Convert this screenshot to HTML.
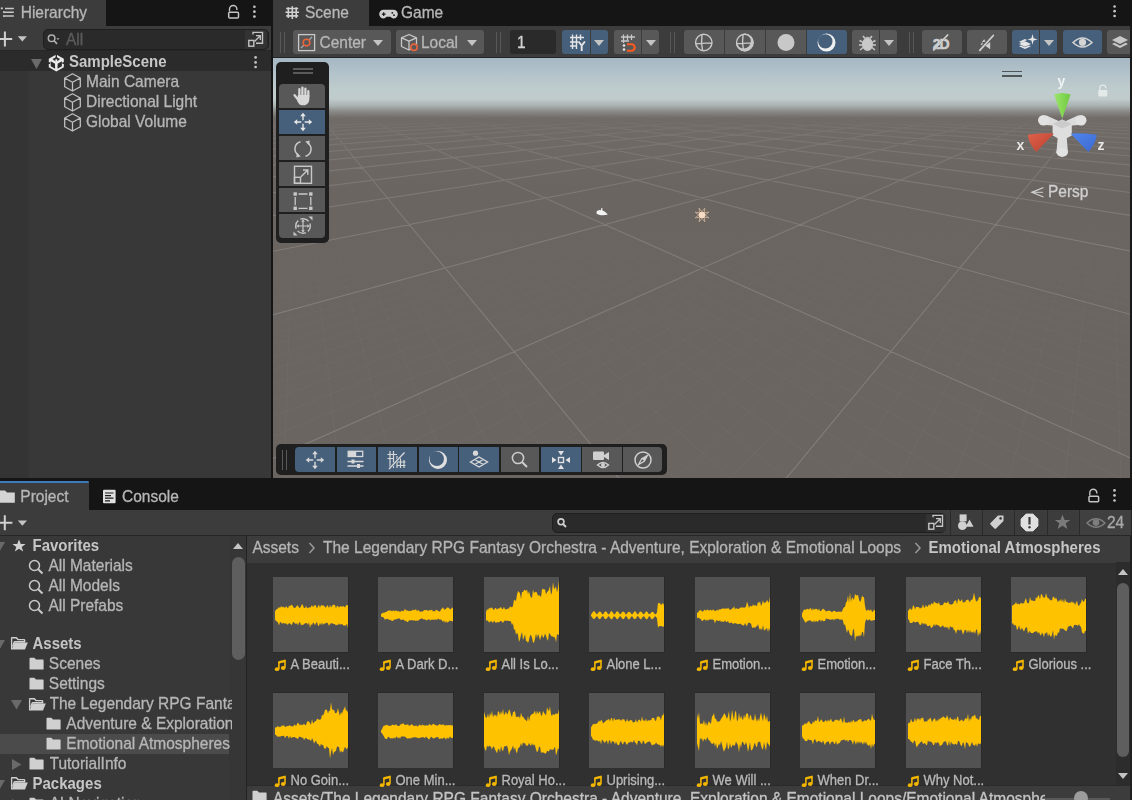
<!DOCTYPE html>
<html><head><meta charset="utf-8"><style>
*{margin:0;padding:0;box-sizing:border-box}
html,body{width:1132px;height:800px;overflow:hidden;background:#151515}
body{position:relative;font-family:"Liberation Sans",sans-serif;color:#b6b6b6;font-size:15px}
.a{position:absolute}
.t{position:absolute;white-space:nowrap;line-height:20px;-webkit-text-stroke:0.3px currentColor;transform:scaleY(1.08);transform-origin:0 15.2px}
svg{position:absolute;overflow:visible}
.t[style*="bold"]{-webkit-text-stroke:0}
</style></head><body>
<!-- Hierarchy panel -->
<div class="a" style="left:0;top:0;width:106px;height:26px;background:#3c3c3c"></div>
<div class="a" style="left:0;top:26px;width:271px;height:24px;background:#3c3c3c"></div>
<div class="a" style="left:0;top:50px;width:271px;height:1px;background:#262626"></div>
<div class="a" style="left:0;top:51px;width:271px;height:20px;background:#2b2b2b"></div>
<div class="a" style="left:0;top:71px;width:271px;height:407px;background:#383838"></div>
<div class="a" style="left:0;top:71px;width:29px;height:407px;background:#343434"></div>
<svg style="left:0;top:5px" width="16" height="16" viewBox="0 0 16 16"><path d="M5 3.4H13.8M5 7.2H13.8M5 11.1H13.8" stroke="#c8c8c8" stroke-width="1.5"/><circle cx="1.8" cy="3.3" r="1.1" fill="#c8c8c8"/><circle cx="4" cy="7.2" r="1.1" fill="#c8c8c8"/><circle cx="4" cy="11.1" r="1.1" fill="#c8c8c8"/></svg>
<div class="t" style="left:20.7px;top:2.5px;font-size:15.5px">Hierarchy</div>
<svg style="left:227px;top:4px" width="14" height="16" viewBox="0 0 14 16"><path d="M2.5 7.5V5.2A3.7 3.7 0 0 1 9.9 5.2V6" fill="none" stroke="#c4c4c4" stroke-width="1.4"/><rect x="1.7" y="8.3" width="9.8" height="5.6" rx="1" fill="none" stroke="#c4c4c4" stroke-width="1.5"/></svg>
<svg style="left:252px;top:5px" width="5" height="14" viewBox="0 0 5 14"><circle cx="2.4" cy="1.75" r="1.35" fill="#c4c4c4"/><circle cx="2.4" cy="6.7" r="1.35" fill="#c4c4c4"/><circle cx="2.4" cy="11.6" r="1.35" fill="#c4c4c4"/></svg>
<svg style="left:0;top:30px" width="30" height="18" viewBox="0 0 30 18"><path d="M4.9 1.5V16.5M0 8.9H12.2" stroke="#d0d0d0" stroke-width="2"/><path d="M17.8 6.2H26.9L22.35 11.6Z" fill="#c4c4c4"/></svg>
<div class="a" style="left:42.5px;top:29px;width:226px;height:20.5px;background:#2a2a2a;border:1px solid #1f1f1f;border-radius:5px"></div>
<div class="a" style="left:245px;top:30px;width:22px;height:18.5px;background:#333333;border-radius:0 4px 4px 0"></div>
<svg style="left:46px;top:33px" width="16" height="14" viewBox="0 0 16 14"><circle cx="5.6" cy="5.2" r="3.3" fill="none" stroke="#b0b0b0" stroke-width="1.5"/><path d="M7.9 7.5L11 10.8" stroke="#b0b0b0" stroke-width="1.7"/><path d="M10.3 5.2H13.5L11.9 7Z" fill="#b0b0b0"/></svg>
<div class="t" style="left:66px;top:29.5px;font-size:15.5px;color:#5c5c5c">All</div>
<svg style="left:247px;top:31px" width="18" height="17" viewBox="0 0 18 17"><path d="M6 3.5V1.4H15.5V12.2H9" fill="none" stroke="#c4c4c4" stroke-width="1.4"/><rect x="1.8" y="9.4" width="5" height="5.8" fill="none" stroke="#c4c4c4" stroke-width="1.4"/><path d="M7.5 10.5L13 5M9 4.7H13.3V9" fill="none" stroke="#c4c4c4" stroke-width="1.3"/></svg>
<svg style="left:31px;top:58.5px" width="11" height="10" viewBox="0 0 11 10"><path d="M0 0H11L5.5 10Z" fill="#6a6a6a"/></svg>
<svg style="left:47.5px;top:53.5px" width="17" height="18" viewBox="0 0 17 18"><path d="M8.3 0.6L15.8 4.8V13.2L8.3 17.4L0.8 13.2V4.8Z" fill="#ececec"/><path d="M2.7 7.3L7.1 9.8V14.7L2.7 12.2Z M13.9 7.3L9.5 9.8V14.7L13.9 12.2Z" fill="#2b2b2b"/><path d="M8.3 2.9L12.2 5.1L8.3 7.9L4.4 5.1Z" fill="#2b2b2b"/><path d="M7.6 0L9 0V5.5H7.6Z M0 8.2H2.2V10H0Z M14.4 8.2H17V10H14.4Z" fill="#2b2b2b"/><path d="M8.3 5.3L8.3 12" stroke="#ececec" stroke-width="1.9"/></svg>
<div class="t" style="left:69px;top:52px;font-weight:bold;color:#c6c6c6;font-size:15px">SampleScene</div>
<svg style="left:253px;top:55px" width="5" height="14" viewBox="0 0 5 14"><circle cx="2.6" cy="2.4" r="1.35" fill="#c4c4c4"/><circle cx="2.6" cy="7.4" r="1.35" fill="#c4c4c4"/><circle cx="2.6" cy="12" r="1.35" fill="#c4c4c4"/></svg>
<svg style="left:64px;top:73px" width="18" height="19" viewBox="0 0 18 19"><path d="M8.5 0.8L16.3 5V13.8L8.5 18L0.7 13.8V5Z M0.7 5L8.5 9.3L16.3 5 M8.5 9.3V18" fill="none" stroke="#c0c0c0" stroke-width="1.3" stroke-linejoin="round"/></svg>
<svg style="left:64px;top:93px" width="18" height="19" viewBox="0 0 18 19"><path d="M8.5 0.8L16.3 5V13.8L8.5 18L0.7 13.8V5Z M0.7 5L8.5 9.3L16.3 5 M8.5 9.3V18" fill="none" stroke="#c0c0c0" stroke-width="1.3" stroke-linejoin="round"/></svg>
<svg style="left:64px;top:113px" width="18" height="19" viewBox="0 0 18 19"><path d="M8.5 0.8L16.3 5V13.8L8.5 18L0.7 13.8V5Z M0.7 5L8.5 9.3L16.3 5 M8.5 9.3V18" fill="none" stroke="#c0c0c0" stroke-width="1.3" stroke-linejoin="round"/></svg>
<div class="t" style="left:86px;top:72px;font-size:15.5px">Main Camera</div>
<div class="t" style="left:86px;top:92px;font-size:15.5px">Directional Light</div>
<div class="t" style="left:86px;top:112px;font-size:15.5px">Global Volume</div>
<!-- Scene panel -->
<div class="a" style="left:273px;top:0;width:96px;height:26px;background:#3c3c3c"></div>
<div class="a" style="left:273px;top:26px;width:859px;height:31px;background:#3c3c3c"></div>
<div class="a" style="left:273px;top:57px;width:859px;height:1px;background:#242424"></div>
<div class="t" style="left:305px;top:3px;font-size:15.5px">Scene</div>
<div class="t" style="left:401px;top:3px;font-size:15.5px">Game</div>
<div class="a" style="left:273px;top:58px;width:859px;height:420px;background:#6b6561;overflow:hidden" id="sv"></div>
<svg class="a" style="left:273px;top:58px" width="859" height="420" viewBox="0 0 859 420">
<defs><linearGradient id="gmin" gradientUnits="userSpaceOnUse" x1="0" y1="0" x2="0" y2="420"><stop offset="0.0714" stop-color="#fff" stop-opacity="0.000"/><stop offset="0.0952" stop-color="#fff" stop-opacity="0.000"/><stop offset="0.1190" stop-color="#fff" stop-opacity="0.000"/><stop offset="0.1429" stop-color="#fff" stop-opacity="0.000"/><stop offset="0.1667" stop-color="#fff" stop-opacity="0.000"/><stop offset="0.1905" stop-color="#fff" stop-opacity="0.000"/><stop offset="0.2143" stop-color="#fff" stop-opacity="0.000"/><stop offset="0.2381" stop-color="#fff" stop-opacity="0.000"/><stop offset="0.2619" stop-color="#fff" stop-opacity="0.000"/><stop offset="0.2857" stop-color="#fff" stop-opacity="0.000"/><stop offset="0.3095" stop-color="#fff" stop-opacity="0.000"/><stop offset="0.3333" stop-color="#fff" stop-opacity="0.000"/><stop offset="0.3571" stop-color="#fff" stop-opacity="0.000"/><stop offset="0.3810" stop-color="#fff" stop-opacity="0.110"/><stop offset="0.4048" stop-color="#fff" stop-opacity="0.204"/><stop offset="0.4286" stop-color="#fff" stop-opacity="0.286"/><stop offset="0.4524" stop-color="#fff" stop-opacity="0.357"/><stop offset="0.4762" stop-color="#fff" stop-opacity="0.420"/><stop offset="0.5000" stop-color="#fff" stop-opacity="0.476"/><stop offset="0.5238" stop-color="#fff" stop-opacity="0.526"/><stop offset="0.5476" stop-color="#fff" stop-opacity="0.571"/><stop offset="0.5714" stop-color="#fff" stop-opacity="0.612"/><stop offset="0.5952" stop-color="#fff" stop-opacity="0.649"/><stop offset="0.6190" stop-color="#fff" stop-opacity="0.683"/><stop offset="0.6429" stop-color="#fff" stop-opacity="0.714"/><stop offset="0.6667" stop-color="#fff" stop-opacity="0.743"/><stop offset="0.6905" stop-color="#fff" stop-opacity="0.769"/><stop offset="0.7143" stop-color="#fff" stop-opacity="0.794"/><stop offset="0.7381" stop-color="#fff" stop-opacity="0.816"/><stop offset="0.7619" stop-color="#fff" stop-opacity="0.837"/><stop offset="0.7857" stop-color="#fff" stop-opacity="0.857"/><stop offset="0.8095" stop-color="#fff" stop-opacity="0.875"/><stop offset="0.8333" stop-color="#fff" stop-opacity="0.893"/><stop offset="0.8571" stop-color="#fff" stop-opacity="0.909"/><stop offset="0.8810" stop-color="#fff" stop-opacity="0.924"/><stop offset="0.9048" stop-color="#fff" stop-opacity="0.939"/><stop offset="0.9286" stop-color="#fff" stop-opacity="0.952"/><stop offset="0.9524" stop-color="#fff" stop-opacity="0.965"/><stop offset="0.9762" stop-color="#fff" stop-opacity="0.977"/><stop offset="1.0000" stop-color="#fff" stop-opacity="0.989"/></linearGradient><linearGradient id="gmaj" gradientUnits="userSpaceOnUse" x1="0" y1="0" x2="0" y2="420"><stop offset="0.0714" stop-color="#fff" stop-opacity="0.000"/><stop offset="0.0952" stop-color="#fff" stop-opacity="0.000"/><stop offset="0.1190" stop-color="#fff" stop-opacity="0.000"/><stop offset="0.1429" stop-color="#fff" stop-opacity="0.099"/><stop offset="0.1667" stop-color="#fff" stop-opacity="0.383"/><stop offset="0.1905" stop-color="#fff" stop-opacity="0.554"/><stop offset="0.2143" stop-color="#fff" stop-opacity="0.667"/><stop offset="0.2381" stop-color="#fff" stop-opacity="0.749"/><stop offset="0.2619" stop-color="#fff" stop-opacity="0.810"/><stop offset="0.2857" stop-color="#fff" stop-opacity="0.857"/><stop offset="0.3095" stop-color="#fff" stop-opacity="0.895"/><stop offset="0.3333" stop-color="#fff" stop-opacity="0.927"/><stop offset="0.3571" stop-color="#fff" stop-opacity="0.952"/><stop offset="0.3810" stop-color="#fff" stop-opacity="0.974"/><stop offset="0.4048" stop-color="#fff" stop-opacity="0.993"/><stop offset="0.4286" stop-color="#fff" stop-opacity="1.000"/><stop offset="0.4524" stop-color="#fff" stop-opacity="1.000"/><stop offset="0.4762" stop-color="#fff" stop-opacity="1.000"/><stop offset="0.5000" stop-color="#fff" stop-opacity="1.000"/><stop offset="0.5238" stop-color="#fff" stop-opacity="1.000"/><stop offset="0.5476" stop-color="#fff" stop-opacity="1.000"/><stop offset="0.5714" stop-color="#fff" stop-opacity="1.000"/><stop offset="0.5952" stop-color="#fff" stop-opacity="1.000"/><stop offset="0.6190" stop-color="#fff" stop-opacity="1.000"/><stop offset="0.6429" stop-color="#fff" stop-opacity="1.000"/><stop offset="0.6667" stop-color="#fff" stop-opacity="1.000"/><stop offset="0.6905" stop-color="#fff" stop-opacity="1.000"/><stop offset="0.7143" stop-color="#fff" stop-opacity="1.000"/><stop offset="0.7381" stop-color="#fff" stop-opacity="1.000"/><stop offset="0.7619" stop-color="#fff" stop-opacity="1.000"/><stop offset="0.7857" stop-color="#fff" stop-opacity="1.000"/><stop offset="0.8095" stop-color="#fff" stop-opacity="1.000"/><stop offset="0.8333" stop-color="#fff" stop-opacity="1.000"/><stop offset="0.8571" stop-color="#fff" stop-opacity="1.000"/><stop offset="0.8810" stop-color="#fff" stop-opacity="1.000"/><stop offset="0.9048" stop-color="#fff" stop-opacity="1.000"/><stop offset="0.9286" stop-color="#fff" stop-opacity="1.000"/><stop offset="0.9524" stop-color="#fff" stop-opacity="1.000"/><stop offset="0.9762" stop-color="#fff" stop-opacity="1.000"/><stop offset="1.0000" stop-color="#fff" stop-opacity="1.000"/></linearGradient><mask id="mmin" maskUnits="userSpaceOnUse" x="0" y="0" width="859" height="420"><rect width="859" height="420" fill="url(#gmin)"/></mask><mask id="mmaj" maskUnits="userSpaceOnUse" x="0" y="0" width="859" height="420"><rect width="859" height="420" fill="url(#gmaj)"/></mask><linearGradient id="sky" gradientUnits="userSpaceOnUse" x1="0" y1="0" x2="0" y2="66"><stop offset="0" stop-color="#a5b7c3"/><stop offset="0.24" stop-color="#b3c3ca"/><stop offset="0.48" stop-color="#bfcccd"/><stop offset="0.62" stop-color="#c0cbcb"/><stop offset="0.72" stop-color="#aab2b2"/><stop offset="0.81" stop-color="#8a8a88"/><stop offset="0.90" stop-color="#736e6a" stop-opacity="0.95"/><stop offset="1" stop-color="#6b6561" stop-opacity="0"/></linearGradient></defs>
<rect x="0" y="0" width="859" height="420" fill="#6b6561"/>
<path mask="url(#mmin)" d="M429.5 67.4L1973.4 210.0M429.5 67.4L-1114.4 210.0M426.8 67.6L2010.6 215.9M432.2 67.6L-1151.6 215.9M424.1 67.9L2050.4 222.2M434.9 67.9L-1191.4 222.2M421.3 68.1L2092.9 228.9M437.7 68.1L-1233.9 228.9M418.5 68.4L2138.5 236.1M440.5 68.4L-1279.5 236.1M415.6 68.7L2187.6 243.9M443.4 68.7L-1328.6 243.9M412.8 68.9L2240.5 252.3M446.2 68.9L-1381.5 252.3M409.8 69.2L2297.7 261.3M449.2 69.2L-1438.7 261.3M406.9 69.5L2359.8 271.2M452.1 69.5L-1500.8 271.2M403.9 69.8L2427.3 281.9M455.1 69.8L-1568.3 281.9M400.8 70.0L2501.2 293.5M458.2 70.0L-1642.2 293.5M397.7 70.3L2582.2 306.4M461.3 70.3L-1723.2 306.4M394.6 70.6L2671.5 320.5M464.4 70.6L-1812.5 320.5M391.4 70.9L2770.4 336.2M467.6 70.9L-1911.4 336.2M388.2 71.2L2880.6 353.6M470.8 71.2L-2021.6 353.6M384.9 71.5L3004.1 373.2M474.1 71.5L-2145.1 373.2M381.6 71.8L3143.5 395.2M477.4 71.8L-2284.5 395.2M378.2 72.1L3302.0 420.3M480.8 72.1L-2443.0 420.3M374.8 72.4L3483.9 449.1M484.2 72.4L-2624.9 449.1M371.3 72.8L3694.8 482.5M487.7 72.8L-2835.8 482.5M367.8 73.1L3942.1 521.6M491.2 73.1L-3083.1 521.6M364.2 73.4L4236.3 568.2M494.8 73.4L-3377.3 568.2M360.6 73.8L4592.0 624.5M498.4 73.8L-3733.0 624.5M356.9 74.1L5030.9 694.0M502.1 74.1L-4171.9 694.0M353.1 74.4L5585.9 781.9M505.9 74.4L-4726.9 781.9M349.3 74.8L6310.1 896.5M509.7 74.8L-5451.1 896.5M345.4 75.2L7294.8 1052.4M513.6 75.2L-6435.8 1052.4M341.5 75.5L8711.5 1276.6M517.5 75.5L-7852.5 1276.6M337.5 75.9L10924.2 1626.9M521.5 75.9L-10065.2 1626.9M333.4 76.3L14865.9 2250.9M525.6 76.3L-14006.9 2250.9M329.3 76.6L15729.9 2431.5M529.7 76.6L-14870.9 2431.5M325.1 77.0L15386.9 2431.5M533.9 77.0L-14527.9 2431.5M320.8 77.4L15043.8 2431.5M538.2 77.4L-14184.8 2431.5M316.5 77.8L14700.7 2431.5M542.5 77.8L-13841.7 2431.5M312.1 78.2L14357.6 2431.5M546.9 78.2L-13498.6 2431.5M307.6 78.6L14014.5 2431.5M551.4 78.6L-13155.5 2431.5M303.0 79.1L13671.4 2431.5M556.0 79.1L-12812.4 2431.5M298.4 79.5L13328.3 2431.5M560.6 79.5L-12469.3 2431.5M293.6 79.9L12985.2 2431.5M565.4 79.9L-12126.2 2431.5M288.8 80.4L12642.2 2431.5M570.2 80.4L-11783.2 2431.5M283.9 80.8L12299.1 2431.5M575.1 80.8L-11440.1 2431.5M278.9 81.3L11956.0 2431.5M580.1 81.3L-11097.0 2431.5M273.8 81.8L11612.9 2431.5M585.2 81.8L-10753.9 2431.5M268.7 82.2L11269.8 2431.5M590.3 82.2L-10410.8 2431.5M263.4 82.7L10926.7 2431.5M595.6 82.7L-10067.7 2431.5M258.0 83.2L10583.6 2431.5M601.0 83.2L-9724.6 2431.5M252.6 83.7L10240.5 2431.5M606.4 83.7L-9381.5 2431.5M247.0 84.2L9897.4 2431.5M612.0 84.2L-9038.4 2431.5M241.3 84.8L9554.4 2431.5M617.7 84.8L-8695.4 2431.5M235.5 85.3L9211.3 2431.5M623.5 85.3L-8352.3 2431.5M229.6 85.9L8868.2 2431.5M629.4 85.9L-8009.2 2431.5M223.6 86.4L8525.1 2431.5M635.4 86.4L-7666.1 2431.5M217.4 87.0L8182.0 2431.5M641.6 87.0L-7323.0 2431.5M211.2 87.6L7838.9 2431.5M647.8 87.6L-6979.9 2431.5M204.8 88.1L7495.8 2431.5M654.2 88.1L-6636.8 2431.5M198.2 88.7L7152.7 2431.5M660.8 88.7L-6293.7 2431.5M191.6 89.4L6809.7 2431.5M667.4 89.4L-5950.7 2431.5M184.7 90.0L6466.6 2431.5M674.3 90.0L-5607.6 2431.5M177.8 90.6L6123.5 2431.5M681.2 90.6L-5264.5 2431.5M170.7 91.3L5780.4 2431.5M688.3 91.3L-4921.4 2431.5M163.4 92.0L5437.3 2431.5M695.6 92.0L-4578.3 2431.5M156.0 92.6L5094.2 2431.5M703.0 92.6L-4235.2 2431.5M148.4 93.4L4751.1 2431.5M710.6 93.4L-3892.1 2431.5M140.7 94.1L4408.0 2431.5M718.3 94.1L-3549.0 2431.5M132.7 94.8L4064.9 2431.5M726.3 94.8L-3205.9 2431.5M124.6 95.6L3721.9 2431.5M734.4 95.6L-2862.9 2431.5M116.3 96.3L3378.8 2431.5M742.7 96.3L-2519.8 2431.5M107.8 97.1L3035.7 2431.5M751.2 97.1L-2176.7 2431.5M99.1 97.9L2692.6 2431.5M759.9 97.9L-1833.6 2431.5M90.1 98.7L2349.5 2431.5M768.9 98.7L-1490.5 2431.5M81.0 99.6L2006.4 2431.5M778.0 99.6L-1147.4 2431.5M71.6 100.4L1663.3 2431.5M787.4 100.4L-804.3 2431.5M62.0 101.3L1320.2 2431.5M797.0 101.3L-461.2 2431.5M52.2 102.2L977.2 2431.5M806.8 102.2L-118.2 2431.5M42.1 103.2L634.1 2431.5M816.9 103.2L224.9 2431.5M31.7 104.1L291.0 2431.5M827.3 104.1L568.0 2431.5M21.1 105.1L-52.1 2431.5M837.9 105.1L911.1 2431.5M10.2 106.1L-395.2 2431.5M848.8 106.1L1254.2 2431.5M-1.0 107.2L-738.3 2431.5M860.0 107.2L1597.3 2431.5M-12.6 108.2L-1081.4 2431.5M871.6 108.2L1940.4 2431.5M-24.4 109.3L-1424.5 2431.5M883.4 109.3L2283.5 2431.5M-36.6 110.4L-1767.5 2431.5M895.6 110.4L2626.5 2431.5M-49.2 111.6L-2110.6 2431.5M908.2 111.6L2969.6 2431.5M-62.1 112.8L-2453.7 2431.5M921.1 112.8L3312.7 2431.5M-75.3 114.0L-2796.8 2431.5M934.3 114.0L3655.8 2431.5M-89.0 115.3L-3139.9 2431.5M948.0 115.3L3998.9 2431.5M-103.1 116.6L-3483.0 2431.5M962.1 116.6L4342.0 2431.5M-117.7 117.9L-3826.1 2431.5M976.7 117.9L4685.1 2431.5M-132.7 119.3L-4169.2 2431.5M991.7 119.3L5028.2 2431.5M-148.1 120.7L-4512.3 2431.5M1007.1 120.7L5371.3 2431.5M-164.1 122.2L-4855.3 2431.5M1023.1 122.2L5714.3 2431.5M-180.6 123.7L-5198.4 2431.5M1039.6 123.7L6057.4 2431.5M-197.7 125.3L-5541.5 2431.5M1056.7 125.3L6400.5 2431.5M-215.3 127.0L-5884.6 2431.5M1074.3 127.0L6743.6 2431.5M-233.6 128.6L-6227.7 2431.5M1092.6 128.6L7086.7 2431.5M-252.5 130.4L-6570.8 2431.5M1111.5 130.4L7429.8 2431.5M-272.1 132.2L-6913.9 2431.5M1131.1 132.2L7772.9 2431.5M-292.4 134.1L-7257.0 2431.5M1151.4 134.1L8116.0 2431.5M-313.4 136.0L-7600.0 2431.5M1172.4 136.0L8459.0 2431.5M-335.3 138.0L-7943.1 2431.5M1194.3 138.0L8802.1 2431.5M-358.0 140.1L-8286.2 2431.5M1217.0 140.1L9145.2 2431.5M-381.6 142.3L-8629.3 2431.5M1240.6 142.3L9488.3 2431.5M-406.2 144.6L-8972.4 2431.5M1265.2 144.6L9831.4 2431.5M-431.8 146.9L-9315.5 2431.5M1290.8 146.9L10174.5 2431.5M-458.4 149.4L-9658.6 2431.5M1317.4 149.4L10517.6 2431.5M-486.2 152.0L-10001.7 2431.5M1345.2 152.0L10860.7 2431.5M-515.2 154.7L-10344.8 2431.5M1374.2 154.7L11203.8 2431.5M-545.5 157.5L-10687.8 2431.5M1404.5 157.5L11546.8 2431.5M-577.2 160.4L-11030.9 2431.5M1436.2 160.4L11889.9 2431.5M-610.4 163.4L-11374.0 2431.5M1469.4 163.4L12233.0 2431.5M-645.2 166.7L-11717.1 2431.5M1504.2 166.7L12576.1 2431.5M-681.7 170.0L-12060.2 2431.5M1540.7 170.0L12919.2 2431.5M-720.1 173.6L-12403.3 2431.5M1579.1 173.6L13262.3 2431.5M-760.4 177.3L-12746.4 2431.5M1619.4 177.3L13605.4 2431.5M-802.9 181.2L-13089.5 2431.5M1661.9 181.2L13948.5 2431.5M-847.7 185.4L-13432.5 2431.5M1706.7 185.4L14291.5 2431.5M-895.1 189.7L-13775.6 2431.5M1754.1 189.7L14634.6 2431.5M-945.1 194.4L-14118.7 2431.5M1804.1 194.4L14977.7 2431.5M-998.2 199.3L-14461.8 2431.5M1857.2 199.3L15320.8 2431.5M-1054.5 204.5L-14804.9 2431.5M1913.5 204.5L15663.9 2431.5M-1114.4 210.0L-15148.0 2431.5M1973.4 210.0L16007.0 2431.5" stroke="#fff" stroke-opacity="0.035" stroke-width="1" fill="none"/>
<path mask="url(#mmaj)" d="M429.5 38.9L8149.0 210.0M429.5 38.9L-7290.0 210.0M423.0 39.0L11541.2 293.5M436.0 39.0L-10682.2 293.5M416.2 39.2L20802.6 521.6M442.8 39.2L-19943.6 521.6M409.3 39.3L98071.1 2431.5M449.7 39.3L-97212.1 2431.5M402.0 39.5L94640.2 2431.5M457.0 39.5L-93781.2 2431.5M394.6 39.7L91209.4 2431.5M464.4 39.7L-90350.4 2431.5M386.9 39.8L87778.5 2431.5M472.1 39.8L-86919.5 2431.5M378.9 40.0L84347.6 2431.5M480.1 40.0L-83488.6 2431.5M370.6 40.2L80916.7 2431.5M488.4 40.2L-80057.7 2431.5M362.0 40.4L77485.8 2431.5M497.0 40.4L-76626.8 2431.5M353.1 40.6L74054.9 2431.5M505.9 40.6L-73195.9 2431.5M343.9 40.8L70624.1 2431.5M515.1 40.8L-69765.1 2431.5M334.3 41.0L67193.2 2431.5M524.7 41.0L-66334.2 2431.5M324.3 41.2L63762.3 2431.5M534.7 41.2L-62903.3 2431.5M313.9 41.4L60331.4 2431.5M545.1 41.4L-59472.4 2431.5M303.0 41.7L56900.5 2431.5M556.0 41.7L-56041.5 2431.5M291.7 41.9L53469.7 2431.5M567.3 41.9L-52610.7 2431.5M279.9 42.2L50038.8 2431.5M579.1 42.2L-49179.8 2431.5M267.6 42.5L46607.9 2431.5M591.4 42.5L-45748.9 2431.5M254.8 42.8L43177.0 2431.5M604.2 42.8L-42318.0 2431.5M241.3 43.1L39746.1 2431.5M617.7 43.1L-38887.1 2431.5M227.2 43.4L36315.2 2431.5M631.8 43.4L-35456.2 2431.5M212.5 43.7L32884.4 2431.5M646.5 43.7L-32025.4 2431.5M196.9 44.0L29453.5 2431.5M662.1 44.0L-28594.5 2431.5M180.6 44.4L26022.6 2431.5M678.4 44.4L-25163.6 2431.5M163.5 44.8L22591.7 2431.5M695.5 44.8L-21732.7 2431.5M145.4 45.2L19160.8 2431.5M713.6 45.2L-18301.8 2431.5M126.3 45.6L15729.9 2431.5M732.7 45.6L-14870.9 2431.5M106.1 46.0L12299.1 2431.5M752.9 46.0L-11440.1 2431.5M84.8 46.5L8868.2 2431.5M774.2 46.5L-8009.2 2431.5M62.1 47.0L5437.3 2431.5M796.9 47.0L-4578.3 2431.5M38.1 47.6L2006.4 2431.5M820.9 47.6L-1147.4 2431.5M12.5 48.1L-1424.5 2431.5M846.5 48.1L2283.5 2431.5M-14.8 48.7L-4855.3 2431.5M873.8 48.7L5714.3 2431.5M-44.0 49.4L-8286.2 2431.5M903.0 49.4L9145.2 2431.5M-75.2 50.1L-11717.1 2431.5M934.2 50.1L12576.1 2431.5M-108.8 50.8L-15148.0 2431.5M967.8 50.8L16007.0 2431.5M-144.9 51.6L-18578.9 2431.5M1003.9 51.6L19437.9 2431.5M-183.9 52.5L-22009.8 2431.5M1042.9 52.5L22868.8 2431.5M-226.1 53.4L-25440.6 2431.5M1085.1 53.4L26299.6 2431.5M-271.9 54.4L-28871.5 2431.5M1130.9 54.4L29730.5 2431.5M-321.9 55.5L-32302.4 2431.5M1180.9 55.5L33161.4 2431.5M-376.6 56.7L-35733.3 2431.5M1235.6 56.7L36592.3 2431.5M-436.7 58.1L-39164.2 2431.5M1295.7 58.1L40023.2 2431.5M-503.1 59.6L-42595.0 2431.5M1362.1 59.6L43454.0 2431.5M-576.9 61.2L-46025.9 2431.5M1435.9 61.2L46884.9 2431.5M-659.2 63.0L-49456.8 2431.5M1518.2 63.0L50315.8 2431.5M-751.7 65.1L-52887.7 2431.5M1610.7 65.1L53746.7 2431.5M-856.5 67.4L-56318.6 2431.5M1715.5 67.4L57177.6 2431.5M-976.0 70.0L-59749.5 2431.5M1835.0 70.0L60608.5 2431.5M-1113.7 73.1L-63180.3 2431.5M1972.7 73.1L64039.3 2431.5M-1274.0 76.6L-66611.2 2431.5M2133.0 76.6L67470.2 2431.5M-1463.1 80.8L-70042.1 2431.5M2322.1 80.8L70901.1 2431.5M-1689.5 85.9L-73473.0 2431.5M2548.5 85.9L74332.0 2431.5M-1965.2 92.0L-76903.9 2431.5M2824.2 92.0L77762.9 2431.5M-2308.6 99.6L-80334.7 2431.5M3167.6 99.6L81193.7 2431.5M-2748.0 109.3L-83765.6 2431.5M3607.0 109.3L84624.6 2431.5M-3330.1 122.2L-87196.5 2431.5M4189.1 122.2L88055.5 2431.5M-4138.1 140.1L-90627.4 2431.5M4997.1 140.1L91486.4 2431.5M-5334.8 166.7L-94058.3 2431.5M6193.8 166.7L94917.3 2431.5M-7290.0 210.0L-97489.2 2431.5M8149.0 210.0L98348.2 2431.5" stroke="#fff" stroke-opacity="0.14" stroke-width="1.15" fill="none"/>
<linearGradient id="haze" gradientUnits="userSpaceOnUse" x1="0" y1="50" x2="0" y2="130"><stop offset="0" stop-color="#9a9a9a" stop-opacity="0.14"/><stop offset="1" stop-color="#9a9a9a" stop-opacity="0"/></linearGradient><rect x="0" y="50" width="859" height="80" fill="url(#haze)"/>
<rect x="0" y="0" width="859" height="66" fill="url(#sky)"/>
</svg>
<div class="a" style="left:280px;top:32px;width:1px;height:21px;background:#585858"></div>
<div class="a" style="left:283.5px;top:32px;width:1px;height:21px;background:#585858"></div>
<div class="a" style="left:293px;top:30px;width:98px;height:24px;background:#585858;border-radius:3px"></div>
<svg style="left:297px;top:33px" width="19" height="19" viewBox="0 0 19 19"><rect x="1.6" y="1.6" width="16" height="16" fill="none" stroke="#c8c8c8" stroke-width="1.3"/><path d="M4 15L7 12M12 7L15 4" stroke="#aaa" stroke-width="1.2"/><circle cx="9.5" cy="9.6" r="3.3" fill="none" stroke="#e8633a" stroke-width="1.6"/></svg>
<div class="t" style="left:319.5px;top:32.5px;font-size:15.5px;">Center</div>
<svg style="left:373.4px;top:40.0px" width="10" height="6" viewBox="0 0 10 6"><path d="M0 0H10L5.0 6Z" fill="#c4c4c4"/></svg>
<div class="a" style="left:396px;top:30px;width:88px;height:24px;background:#585858;border-radius:3px"></div>
<svg style="left:400px;top:33px" width="20" height="20" viewBox="0 0 20 20"><path d="M9 1.5L16.5 4.8V13.5L9 17L1.5 13.5V4.8Z M1.5 4.8L9 8.2L16.5 4.8 M9 8.2V17" fill="none" stroke="#c8c8c8" stroke-width="1.3" stroke-linejoin="round"/><circle cx="14" cy="14.3" r="3.2" fill="#585858" stroke="#e8633a" stroke-width="1.6"/></svg>
<div class="t" style="left:421px;top:32.5px;font-size:15.5px;">Local</div>
<svg style="left:466.5px;top:40.0px" width="10" height="6" viewBox="0 0 10 6"><path d="M0 0H10L5.0 6Z" fill="#c4c4c4"/></svg>
<div class="a" style="left:496px;top:32px;width:1px;height:21px;background:#585858"></div>
<div class="a" style="left:499.5px;top:32px;width:1px;height:21px;background:#585858"></div>
<div class="a" style="left:510px;top:30px;width:46px;height:24px;background:#2a2a2a;border-radius:3px"></div>
<div class="t" style="left:517px;top:32.5px;font-size:15.5px;color:#d2d2d2">1</div>
<div class="a" style="left:562px;top:30px;width:27.5px;height:24px;background:#46607c;border-radius:3px 0 0 3px"></div>
<div class="a" style="left:590.5px;top:30px;width:17.5px;height:24px;background:#46607c;border-radius:0 3px 3px 0"></div>
<svg style="left:569px;top:33px" width="20" height="20" viewBox="0 0 20 20"><path d="M3.5 1.5V16M7.5 1.5V16M11.5 1.5V7M1 4.5H15M1 9H9M1 13H7" stroke="#e6e6e6" stroke-width="1.4" fill="none"/><path d="M9.5 8.5L12.7 12.5L15.9 8.5M12.7 12.5V18" stroke="#e6e6e6" stroke-width="1.9" fill="none"/></svg>
<svg style="left:594.3px;top:40.0px" width="10" height="6" viewBox="0 0 10 6"><path d="M0 0H10L5.0 6Z" fill="#c4c4c4"/></svg>
<div class="a" style="left:613.5px;top:30px;width:27.5px;height:24px;background:#585858;border-radius:3px 0 0 3px"></div>
<div class="a" style="left:642px;top:30px;width:17px;height:24px;background:#585858;border-radius:0 3px 3px 0"></div>
<svg style="left:620px;top:33px" width="20" height="20" viewBox="0 0 20 20"><path d="M3.5 1.5V10M7.5 1.5V7M11.5 1.5V7M1 4H15M1 8H9" stroke="#c8c8c8" stroke-width="1.3" fill="none"/><circle cx="4" cy="12.5" r="1.3" fill="#e6e6e6"/><circle cx="4" cy="16.5" r="1.3" fill="#e6e6e6"/><path d="M7 11.3H11.5A3.2 3.2 0 0 1 11.5 17.7H7" stroke="#ff5a1f" stroke-width="2.1" fill="none"/></svg>
<svg style="left:645.5px;top:40.0px" width="10" height="6" viewBox="0 0 10 6"><path d="M0 0H10L5.0 6Z" fill="#c4c4c4"/></svg>
<div class="a" style="left:670px;top:32px;width:1px;height:21px;background:#585858"></div>
<div class="a" style="left:673.5px;top:32px;width:1px;height:21px;background:#585858"></div>
<div class="a" style="left:684px;top:30px;width:39.5px;height:24px;background:#585858;border-radius:3px 0 0 3px"></div>
<div class="a" style="left:725px;top:30px;width:39.5px;height:24px;background:#585858;border-radius:0"></div>
<div class="a" style="left:766px;top:30px;width:39.5px;height:24px;background:#585858;border-radius:0"></div>
<div class="a" style="left:807px;top:30px;width:39.799999999999955px;height:24px;background:#46607c;border-radius:0 3px 3px 0"></div>
<svg style="left:694px;top:33px" width="20" height="20" viewBox="0 0 20 20"><circle cx="9.8" cy="9.5" r="8.2" fill="none" stroke="#c8c8c8" stroke-width="1.4"/><path d="M1.8 10.8Q9.8 9.8 17.9 10.3M8 1.6Q6.8 9.5 8.6 17.6" fill="none" stroke="#c8c8c8" stroke-width="1.4"/></svg>
<svg style="left:735px;top:33px" width="20" height="20" viewBox="0 0 20 20"><circle cx="9.8" cy="9.5" r="8.2" fill="none" stroke="#c8c8c8" stroke-width="1.4"/><path d="M1.8 10.8Q9.8 9.8 17.9 10.3M8 1.6Q6.8 9.5 8.6 17.6" fill="none" stroke="#c8c8c8" stroke-width="1.4"/><path fill-rule="evenodd" d="M0.9000000000000004 9.5A8.9 8.9 0 1 0 18.700000000000003 9.5A8.9 8.9 0 1 0 0.9000000000000004 9.5Z M1.3999999999999995 8.4A7.2 7.2 0 1 0 15.8 8.4A7.2 7.2 0 1 0 1.3999999999999995 8.4Z" fill="#c8c8c8"/></svg>
<svg style="left:776px;top:33px" width="20" height="20" viewBox="0 0 20 20"><circle cx="10" cy="9.5" r="8.5" fill="#c8c8c8"/></svg>
<svg style="left:817px;top:33px" width="20" height="20" viewBox="0 0 20 20"><path fill-rule="evenodd" d="M0.5 9.6A9 9 0 1 0 18.5 9.6A9 9 0 1 0 0.5 9.6Z M1.1000000000000005 8.4A7.2 7.2 0 1 0 15.5 8.4A7.2 7.2 0 1 0 1.1000000000000005 8.4Z" fill="#f0f0f0"/></svg>
<div class="a" style="left:851.7px;top:30px;width:26.899999999999977px;height:24px;background:#585858;border-radius:3px 0 0 3px"></div>
<div class="a" style="left:880px;top:30px;width:17.200000000000045px;height:24px;background:#585858;border-radius:0 3px 3px 0"></div>
<svg style="left:858px;top:33px" width="20" height="20" viewBox="0 0 20 20"><path d="M6.5 4.8Q9.5 2.5 12.5 4.8Z" fill="#c8c8c8"/><ellipse cx="9.5" cy="11.3" rx="5.6" ry="6.6" fill="#c8c8c8"/><path d="M5 3L7 5.5M14 3L12 5.5M1.5 7.5L4.5 9M17.5 7.5L14.5 9M1 12H4M18 12H15M2 17L5 14.5M17 17L14 14.5" stroke="#c8c8c8" stroke-width="1.5"/></svg>
<svg style="left:883.6px;top:40.0px" width="10" height="6" viewBox="0 0 10 6"><path d="M0 0H10L5.0 6Z" fill="#c4c4c4"/></svg>
<div class="a" style="left:909px;top:32px;width:1px;height:21px;background:#585858"></div>
<div class="a" style="left:912.5px;top:32px;width:1px;height:21px;background:#585858"></div>
<div class="a" style="left:922px;top:30px;width:40px;height:24px;background:#585858;border-radius:3px"></div>
<svg style="left:932px;top:33px" width="22" height="20" viewBox="0 0 22 20"><text x="0.8" y="15.8" font-family="Liberation Sans" font-weight="bold" font-size="14" fill="#cfcfcf" stroke="#cfcfcf" stroke-width="0.5" letter-spacing="-1.2">2D</text><path d="M2 17.2L15.8 2.2" stroke="#585858" stroke-width="1.2"/><path d="M1.8 17L15.6 2" stroke="#cfcfcf" stroke-width="1.8" stroke-linecap="round"/></svg>
<div class="a" style="left:967px;top:30px;width:39.60000000000002px;height:24px;background:#585858;border-radius:3px"></div>
<svg style="left:977px;top:33px" width="22" height="20" viewBox="0 0 22 20"><path d="M4.5 9.5L7.2 6.2L8.5 8.5Z M3.5 11L6 9.8L5 12.5Z" fill="#cfcfcf"/><path d="M8.2 12.8L13.2 9V16.2Z" fill="#cfcfcf"/><path d="M2.8 17.3L16.3 2.5" stroke="#cfcfcf" stroke-width="1.8" stroke-linecap="round"/></svg>
<div class="a" style="left:1011.8px;top:30px;width:26.90000000000009px;height:24px;background:#46607c;border-radius:3px 0 0 3px"></div>
<div class="a" style="left:1040px;top:30px;width:17px;height:24px;background:#46607c;border-radius:0 3px 3px 0"></div>
<svg style="left:1018px;top:33px" width="22" height="20" viewBox="0 0 22 20"><path d="M1 11L7 8.3L13 11L7 13.8Z" fill="#e6e6e6"/><path d="M1 13.3L3 12.4L7 14.3L11 12.4L13 13.3L7 16.1Z" fill="#e6e6e6"/><path d="M1 8.7L7 6L9 6.9L3.5 9.9Z" fill="#e6e6e6"/><path d="M14.5 1L15.6 5.3L19.5 6.4L15.6 7.5L14.5 11.8L13.4 7.5L9.5 6.4L13.4 5.3Z" fill="#e6e6e6"/></svg>
<svg style="left:1043.5px;top:40.0px" width="10" height="6" viewBox="0 0 10 6"><path d="M0 0H10L5.0 6Z" fill="#c4c4c4"/></svg>
<div class="a" style="left:1062.8px;top:30px;width:39.200000000000045px;height:24px;background:#46607c;border-radius:3px"></div>
<svg style="left:1072px;top:35px" width="21" height="15" viewBox="0 0 21 15"><path d="M1 7.5Q10.5 -1.5 20 7.5Q10.5 16.5 1 7.5Z" fill="none" stroke="#d4d4d4" stroke-width="1.6"/><circle cx="10.5" cy="7.3" r="3.6" fill="#d4d4d4"/></svg>
<div class="a" style="left:1107px;top:30px;width:29px;height:24px;background:#585858;border-radius:3px"></div>
<svg style="left:1111px;top:34px" width="20" height="18" viewBox="0 0 20 18"><path d="M1 6L9 2L17 6L9 10Z" fill="#c8c8c8"/><path d="M1 10L3.5 8.8L9 11.7L14.5 8.8L17 10L9 14Z" fill="#c8c8c8"/></svg>
<div class="a" style="left:1130px;top:26px;width:2px;height:32px;background:#232323"></div>
<svg style="left:284px;top:5px" width="16" height="15" viewBox="0 0 16 15"><path d="M4.3 2.2V13M8.3 1.2V14M12.2 2.2V13M2.2 3.5H14.2M1.4 7.2H15M2.2 10.9H14.2" stroke="#d0d0d0" stroke-width="1.6"/></svg>
<svg style="left:379px;top:9px" width="20" height="11" viewBox="0 0 20 11"><path d="M4.5 0.8H14.5A4.3 4.3 0 0 1 14.5 9.4Q12.8 9.4 11.5 7.8H7.5Q6.2 9.4 4.5 9.4A4.3 4.3 0 0 1 4.5 0.8Z" fill="#d0d0d0"/><path d="M2.8 5.1H6.6M4.7 3.2V7" stroke="#191919" stroke-width="1.2"/><circle cx="13.3" cy="3.8" r="0.9" fill="#191919"/><circle cx="15" cy="6.2" r="0.9" fill="#191919"/></svg>
<svg style="left:1112px;top:5px" width="5" height="14" viewBox="0 0 5 14"><circle cx="2.6" cy="1.5" r="1.35" fill="#c4c4c4"/><circle cx="2.6" cy="6.2" r="1.35" fill="#c4c4c4"/><circle cx="2.6" cy="11" r="1.35" fill="#c4c4c4"/></svg>
<div class="a" style="left:276px;top:61.6px;width:52.5px;height:181px;background:#1f1f1f;border-radius:5px"></div>
<div class="a" style="left:292.6px;top:68.4px;width:20px;height:1.2px;background:#5a5a5a;"></div>
<div class="a" style="left:292.6px;top:72.4px;width:20px;height:1.2px;background:#5a5a5a;"></div>
<div class="a" style="left:279px;top:83.5px;width:46px;height:24.5px;background:#585858;border-radius:4px 4px 0 0"></div>
<div class="a" style="left:279px;top:110px;width:46px;height:24px;background:#46607c;border-radius:0"></div>
<div class="a" style="left:279px;top:136px;width:46px;height:24px;background:#585858;border-radius:0"></div>
<div class="a" style="left:279px;top:162px;width:46px;height:24px;background:#585858;border-radius:0"></div>
<div class="a" style="left:279px;top:188px;width:46px;height:24px;background:#585858;border-radius:0"></div>
<div class="a" style="left:279px;top:214px;width:46px;height:24px;background:#585858;border-radius:0 0 4px 4px"></div>
<svg style="left:292px;top:85px" width="22" height="22" viewBox="0 0 22 22"><path d="M7.4 11V4.2M10.4 10.5V2.6M13.4 10.5V3.6M16.3 11.5V6.2M5.6 14L2.6 10.2" stroke="#d8d8d8" stroke-width="2.3" stroke-linecap="round"/><path d="M5.9 10H17.4V14Q17.2 18.8 13 20.3H9.6Q7 20 5 15.5Z" fill="#d8d8d8"/></svg>
<svg style="left:293px;top:112px" width="20" height="20" viewBox="0 0 20 20"><path d="M10 3.5V8.3M10 11.7V16.5M3.5 10H8.3M11.7 10H16.5" stroke="#e6e6e6" stroke-width="1.4"/><path d="M10 0.8L12.8 4.2H7.2Z M10 19.2L12.8 15.8H7.2Z M0.8 10L4.2 7.2V12.8Z M19.2 10L15.8 7.2V12.8Z" fill="#e6e6e6"/></svg>
<svg style="left:293px;top:139px" width="20" height="20" viewBox="0 0 20 20"><path d="M7.5 2.8A7.3 7.3 0 0 0 5.6 16.2M12.5 17.2A7.3 7.3 0 0 0 14.4 3.8" fill="none" stroke="#c8c8c8" stroke-width="1.5"/><path d="M3.6 13.6L7.8 17.6L3.4 18.4Z M16.4 6.4L12.2 2.4L16.6 1.6Z" fill="#c8c8c8"/></svg>
<svg style="left:293px;top:164.5px" width="20" height="20" viewBox="0 0 20 20"><rect x="1.5" y="1.3" width="17" height="17" fill="none" stroke="#c8c8c8" stroke-width="1.4"/><rect x="1.5" y="12.3" width="6" height="6" fill="none" stroke="#c8c8c8" stroke-width="1.4"/><path d="M8 11.8L14.5 5.3M10 5H14.8V9.8" fill="none" stroke="#c8c8c8" stroke-width="1.4"/></svg>
<svg style="left:293px;top:190.5px" width="20" height="20" viewBox="0 0 20 20"><path d="M5.5 3H14.5M5.5 17.3H14.5M2.2 6V14.3M17.8 6V14.3" stroke="#c8c8c8" stroke-width="1.3"/><rect x="0.5" y="1.3" width="3.4" height="3.4" fill="#c8c8c8"/><rect x="16.1" y="1.3" width="3.4" height="3.4" fill="#c8c8c8"/><rect x="0.5" y="15.6" width="3.4" height="3.4" fill="#c8c8c8"/><rect x="16.1" y="15.6" width="3.4" height="3.4" fill="#c8c8c8"/></svg>
<svg style="left:293px;top:216px" width="20" height="20" viewBox="0 0 20 20"><circle cx="10" cy="10" r="7.3" fill="none" stroke="#c8c8c8" stroke-width="1.4" stroke-dasharray="9 2.5" stroke-dashoffset="3"/><path d="M10 4.5V15.5M4.5 10H15.5" stroke="#c8c8c8" stroke-width="1.2"/><path d="M10 3.5L11.8 5.8H8.2Z M10 16.5L11.8 14.2H8.2Z M3.5 10L5.8 8.2V11.8Z M16.5 10L14.2 8.2V11.8Z" fill="#c8c8c8"/><path d="M19.5 0.5V4.5L15.5 0.5Z M0.5 19.5V15.5L4.5 19.5Z" fill="#c8c8c8"/></svg>
<div class="a" style="left:276px;top:444.2px;width:390.5px;height:30.5px;background:#1f1f1f;border-radius:5px"></div>
<div class="a" style="left:281.5px;top:450px;width:1.2px;height:19.5px;background:#5a5a5a;"></div>
<div class="a" style="left:285.7px;top:450px;width:1.2px;height:19.5px;background:#5a5a5a;"></div>
<div class="a" style="left:295.3px;top:446.8px;width:39.69999999999999px;height:25px;background:#46607c;border-radius:4px 0 0 4px"></div>
<div class="a" style="left:336.5px;top:446.8px;width:39.69999999999999px;height:25px;background:#46607c;border-radius:0"></div>
<div class="a" style="left:377.6px;top:446.8px;width:39.69999999999999px;height:25px;background:#46607c;border-radius:0"></div>
<div class="a" style="left:418.5px;top:446.8px;width:39.5px;height:25px;background:#46607c;border-radius:0"></div>
<div class="a" style="left:459.2px;top:446.8px;width:39.80000000000001px;height:25px;background:#46607c;border-radius:0"></div>
<div class="a" style="left:500.6px;top:446.8px;width:38.89999999999998px;height:25px;background:#585858;border-radius:0"></div>
<div class="a" style="left:541.4px;top:446.8px;width:39.30000000000007px;height:25px;background:#46607c;border-radius:0"></div>
<div class="a" style="left:582.3px;top:446.8px;width:39.5px;height:25px;background:#585858;border-radius:0"></div>
<div class="a" style="left:623px;top:446.8px;width:39.39999999999998px;height:25px;background:#585858;border-radius:0 4px 4px 0"></div>
<svg style="left:305.15px;top:449.5px" width="20" height="20" viewBox="0 0 20 20"><path d="M10 3.5V8.3M10 11.7V16.5M3.5 10H8.3M11.7 10H16.5" stroke="#d8d8d8" stroke-width="1.4"/><path d="M10 0.8L12.8 4.2H7.2Z M10 19.2L12.8 15.8H7.2Z M0.8 10L4.2 7.2V12.8Z M19.2 10L15.8 7.2V12.8Z" fill="#d8d8d8"/></svg>
<svg style="left:346.35px;top:449.5px" width="20" height="20" viewBox="0 0 20 20"><rect x="2.2" y="1.3" width="14.5" height="5.2" fill="none" stroke="#d8d8d8" stroke-width="1.3"/><rect x="2.2" y="1.3" width="8" height="5.2" fill="#d8d8d8"/><path d="M1.5 11.5H17.5M1.5 16H17.5" stroke="#d8d8d8" stroke-width="1.3"/><rect x="5.5" y="9.5" width="3" height="4" fill="#d8d8d8"/><rect x="11" y="14" width="3" height="4" fill="#d8d8d8"/></svg>
<svg style="left:387.45000000000005px;top:449.5px" width="20" height="20" viewBox="0 0 20 20"><path d="M3 1V18M6.5 1V18M10 6V18M13.5 8V18M17 10V18M0.5 4.5H10M0.5 8.5H7M10 12H18.5M10 15.5H18.5" stroke="#d8d8d8" stroke-width="1.2"/><path d="M2 19L17.5 2.5" stroke="#46607c" stroke-width="2.5"/><path d="M2 19L17.5 2.5" stroke="#d8d8d8" stroke-width="1.3"/></svg>
<svg style="left:428.25px;top:449.5px" width="20" height="20" viewBox="0 0 20 20"><path fill-rule="evenodd" d="M1 10A9 9 0 1 0 19 10A9 9 0 1 0 1 10Z M1.6000000000000005 8.8A7.2 7.2 0 1 0 16.0 8.8A7.2 7.2 0 1 0 1.6000000000000005 8.8Z" fill="#e0e0e0"/></svg>
<svg style="left:469.1px;top:449.5px" width="20" height="20" viewBox="0 0 20 20"><circle cx="6.5" cy="3.2" r="2.6" fill="#d8d8d8"/><path d="M1.5 12L10 7L18.5 12L10 17Z M5.75 9.5L14.25 14.5M14.25 9.5L5.75 14.5" fill="none" stroke="#d8d8d8" stroke-width="1.4"/></svg>
<svg style="left:510.04999999999995px;top:449.5px" width="20" height="20" viewBox="0 0 20 20"><circle cx="8" cy="8" r="5.6" fill="none" stroke="#cfcfcf" stroke-width="1.5"/><path d="M12 12L17 17" stroke="#cfcfcf" stroke-width="2"/></svg>
<svg style="left:551.05px;top:449.5px" width="20" height="20" viewBox="0 0 20 20"><rect x="7.5" y="7.5" width="5" height="5" fill="none" stroke="#e0e0e0" stroke-width="1.4"/><path d="M7 1H13L10 5.5Z M7 19H13L10 14.5Z M1 7V13L5.5 10Z M19 7V13L14.5 10Z" fill="#e0e0e0"/></svg>
<svg style="left:592.05px;top:449.5px" width="20" height="20" viewBox="0 0 20 20"><rect x="1" y="1.5" width="11" height="8.5" rx="1" fill="#d0d0d0"/><path d="M12 5L17 2V10L12 7Z" fill="#d0d0d0"/><path d="M5.5 15Q11 10 16.5 15Q11 20 5.5 15Z" fill="none" stroke="#d0d0d0" stroke-width="1.4"/><circle cx="11" cy="15" r="2" fill="#d0d0d0"/></svg>
<svg style="left:632.7px;top:449.5px" width="20" height="20" viewBox="0 0 20 20"><circle cx="10" cy="10" r="8" fill="none" stroke="#cfcfcf" stroke-width="1.5"/><path d="M14.5 5.5L11.3 11.3L5.5 14.5L8.7 8.7Z" fill="none" stroke="#cfcfcf" stroke-width="1.3"/><path d="M14.5 5.5L8.7 8.7L11.3 11.3Z" fill="#cfcfcf"/></svg>
<svg style="left:594px;top:204px" width="16" height="14" viewBox="0 0 16 14"><path d="M2.5 9.5Q2 6.5 5 6.2Q6 6 7 6.3Q6.8 4.5 7.8 3.8L8.5 4.2Q7.9 5.5 8.6 6.6Q10.2 7.2 11.5 8.3Q13.2 9.6 13.8 10.6Q10.5 11.6 7 11.2Q3.5 10.9 2.5 9.5Z" fill="#f2f2f2"/></svg>
<svg style="left:694px;top:207px" width="16" height="16" viewBox="0 0 16 16"><path d="M11.20 8.00L14.94 10.85L10.26 10.26" fill="none" stroke="#bfa48c" stroke-width="1"/><path d="M10.26 10.26L10.89 14.92L8.00 11.20" fill="none" stroke="#bfa48c" stroke-width="1"/><path d="M8.00 11.20L5.15 14.94L5.74 10.26" fill="none" stroke="#bfa48c" stroke-width="1"/><path d="M5.74 10.26L1.08 10.89L4.80 8.00" fill="none" stroke="#bfa48c" stroke-width="1"/><path d="M4.80 8.00L1.06 5.15L5.74 5.74" fill="none" stroke="#bfa48c" stroke-width="1"/><path d="M5.74 5.74L5.11 1.08L8.00 4.80" fill="none" stroke="#bfa48c" stroke-width="1"/><path d="M8.00 4.80L10.85 1.06L10.26 5.74" fill="none" stroke="#bfa48c" stroke-width="1"/><path d="M10.26 5.74L14.92 5.11L11.20 8.00" fill="none" stroke="#bfa48c" stroke-width="1"/><circle cx="8" cy="8" r="3.3" fill="#f7dbc3"/></svg>
<div class="a" style="left:1001.5px;top:70.6px;width:20.5px;height:1.3px;background:#505558"></div>
<div class="a" style="left:1001.5px;top:75.4px;width:20.5px;height:1.3px;background:#505558"></div>
<div class="t" style="left:1057.5px;top:73px;font-size:14px;font-weight:bold;color:#eef2f2;line-height:16px">y</div>
<svg style="left:1097px;top:84px" width="12" height="13" viewBox="0 0 12 13"><path d="M2.8 6V4.2A3 3 0 0 1 8.8 4.2" fill="none" stroke="#e4eaea" stroke-width="1.3"/><rect x="1.3" y="6" width="9" height="6.4" rx="0.8" fill="#e4eaea"/></svg>
<svg style="left:1020px;top:85px" width="90" height="75" viewBox="0 0 90 75"><defs><linearGradient id="gg" x1="0" y1="0" x2="1" y2="0"><stop offset="0" stop-color="#9be46a"/><stop offset="1" stop-color="#6fca3f"/></linearGradient><linearGradient id="gr" x1="0" y1="0" x2="1" y2="1"><stop offset="0" stop-color="#e0614a"/><stop offset="1" stop-color="#b8402f"/></linearGradient><linearGradient id="gb" x1="0" y1="0" x2="1" y2="1"><stop offset="0" stop-color="#4f86ee"/><stop offset="1" stop-color="#3c68d0"/></linearGradient></defs><path d="M38.0 41.0L20.0 39.5Q18.0 31.0 26.5 30.5L43.0 38.0Z" fill="#dcdcdc"/><ellipse cx="23.5" cy="35.3" rx="5.5" ry="5.3" fill="#e2e2e2"/><path d="M46.4 41.0L64.4 39.5Q66.4 31.0 57.9 30.5L41.4 38.0Z" fill="#dcdcdc"/><ellipse cx="61" cy="35.3" rx="5.5" ry="5.3" fill="#e2e2e2"/><path d="M38.0 49.0L36.4 67.5Q42.2 72.0 48.0 67.5L46.4 49.0Z" fill="#dcdcdc"/><ellipse cx="42.200000000000045" cy="67.30000000000001" rx="5.8" ry="4.6" fill="#e2e2e2"/><path d="M42.2 34.5L51.8 39.0V51.8 50.5L42.2 55.5L32.6 50.5V32.6 39.0Z" fill="#dedede"/><path d="M42.2 34.5L51.8 39.0L42.2 43.5L32.6 39.0Z" fill="#cbcbcb"/><path d="M34.2 9.5Q42.2 6.5 50.6 9.5L42.2 33.8Z" fill="url(#gg)"/><path d="M7.8 49.8Q20.0 47.5 34.0 48.6L16.2 67.0Q8.5 58.0 7.8 49.8Z" fill="url(#gr)"/><path d="M50.5 48.6Q64.5 47.5 76.8 49.8Q76.0 58.0 68.4 67.0Z" fill="url(#gb)"/></svg>
<div class="t" style="left:1016.5px;top:136px;font-size:14px;font-weight:bold;color:#e8e8e8;line-height:18px">x</div>
<div class="t" style="left:1097.5px;top:136px;font-size:14px;font-weight:bold;color:#e8e8e8;line-height:18px">z</div>
<svg style="left:1030px;top:186px" width="16" height="13" viewBox="0 0 16 13"><path d="M13.5 1.5L2 6.3L13.5 11" fill="none" stroke="#cfcfcf" stroke-width="1.3"/><path d="M2 6.3H13" stroke="#cfcfcf" stroke-width="1"/></svg>
<div class="t" style="left:1048px;top:182px;font-size:15.5px;color:#cfcfcf">Persp</div>
<div class="a" style="left:1130px;top:26px;width:2px;height:452px;background:#191919"></div>
<div class="a" style="left:0px;top:480.5px;width:89px;height:29.5px;background:#3c3c3c;"></div>
<div class="a" style="left:0px;top:480.5px;width:89px;height:2.5px;background:#3a7abd;border-radius:0 2px 0 0"></div>
<svg style="left:0px;top:489px" width="16" height="15" viewBox="0 0 16 15"><path d="M-1 1.5H5L7 3.5H14.8V13.7H-1Z" fill="#d4d4d4"/></svg>
<div class="t" style="left:20.3px;top:486.5px;font-size:15.5px;">Project</div>
<svg style="left:102px;top:489px" width="15" height="15" viewBox="0 0 15 15"><rect x="1" y="0.8" width="12.6" height="13.4" rx="1" fill="#e0e0e0"/><path d="M3 4H11.5M3 6.6H9M3 9.2H11.5M3 11.8H8" stroke="#191919" stroke-width="1.2"/></svg>
<div class="t" style="left:122px;top:486.5px;font-size:15.5px;">Console</div>
<svg style="left:1087px;top:488px" width="14" height="15" viewBox="0 0 14 15"><path d="M2.8 7.5V4.7A3.5 3.5 0 0 1 9.8 4.7V5.6" fill="none" stroke="#c4c4c4" stroke-width="1.4"/><rect x="2" y="8.2" width="9.6" height="5.6" rx="1" fill="none" stroke="#c4c4c4" stroke-width="1.5"/></svg>
<svg style="left:1112px;top:488px" width="5" height="14" viewBox="0 0 5 14"><circle cx="2.5" cy="2.4" r="1.35" fill="#c4c4c4"/><circle cx="2.5" cy="7.4" r="1.35" fill="#c4c4c4"/><circle cx="2.5" cy="12.5" r="1.35" fill="#c4c4c4"/></svg>
<div class="a" style="left:0px;top:510px;width:1132px;height:24.5px;background:#3c3c3c;"></div>
<div class="a" style="left:0px;top:534.5px;width:1132px;height:1.5px;background:#262626;"></div>
<svg style="left:0px;top:514px" width="30" height="18" viewBox="0 0 30 18"><path d="M4.8 1.3V16.2M0 8.8H12.4" stroke="#d0d0d0" stroke-width="2"/><path d="M17.8 6.5H27L22.4 11.7Z" fill="#c4c4c4"/></svg>
<div class="a" style="left:552px;top:513px;width:394px;height:19.5px;background:#2a2a2a;border:1px solid #1f1f1f;border-radius:5px"></div>
<div class="a" style="left:925.5px;top:514px;width:20px;height:17.5px;background:#333333;border-radius:0 4px 4px 0"></div>
<svg style="left:555px;top:516px" width="14" height="14" viewBox="0 0 14 14"><circle cx="6" cy="5.8" r="2.9" fill="none" stroke="#d0d0d0" stroke-width="1.6"/><path d="M8 8L11 11" stroke="#d0d0d0" stroke-width="1.9"/></svg>
<svg style="left:927px;top:514px" width="18" height="17" viewBox="0 0 18 17"><path d="M6 3.3V1.4H15.5V12.2H9" fill="none" stroke="#c4c4c4" stroke-width="1.4"/><rect x="1.8" y="9.4" width="5" height="5.8" fill="none" stroke="#c4c4c4" stroke-width="1.4"/><path d="M7.5 10.5L13 5M9 4.7H13.3V9" fill="none" stroke="#c4c4c4" stroke-width="1.3"/></svg>
<div class="a" style="left:949.7px;top:510px;width:1px;height:24.5px;background:#2a2a2a;"></div>
<div class="a" style="left:982.2px;top:510px;width:1px;height:24.5px;background:#2a2a2a;"></div>
<div class="a" style="left:1014.4px;top:510px;width:1px;height:24.5px;background:#2a2a2a;"></div>
<div class="a" style="left:1046.5px;top:510px;width:1px;height:24.5px;background:#2a2a2a;"></div>
<div class="a" style="left:1079.4px;top:510px;width:1px;height:24.5px;background:#2a2a2a;"></div>
<svg style="left:955px;top:512px" width="22" height="20" viewBox="0 0 22 20"><rect x="4.6" y="2.4" width="7" height="7" fill="#d0d0d0"/><path d="M14.5 7.5L18.5 14.8H10.5Z" fill="#d0d0d0"/><circle cx="7.4" cy="13.7" r="4.4" fill="#d0d0d0"/></svg>
<svg style="left:988px;top:513px" width="18" height="18" viewBox="0 0 18 18"><path d="M10 2.5H15.5V8L8 15.5Q7.2 16.3 6.4 15.5L2.5 11.6Q1.7 10.8 2.5 10Z" fill="#d0d0d0"/><circle cx="12.6" cy="5.4" r="1.3" fill="#3c3c3c"/></svg>
<svg style="left:1020px;top:513px" width="19" height="19" viewBox="0 0 19 19"><path d="M6 1H13L18 6V13L13 18H6L1 13V6Z" fill="#e0e0e0" stroke="#e0e0e0" stroke-width="0.8" stroke-linejoin="round"/><path d="M9.5 4V11.5" stroke="#3c3c3c" stroke-width="2.2"/><circle cx="9.5" cy="14.3" r="1.2" fill="#3c3c3c"/></svg>
<svg style="left:1054px;top:514px" width="17" height="17" viewBox="0 0 17 17"><path d="M8.5 0.8L10.6 6H16.2L11.7 9.3L13.4 15L8.5 11.7L3.6 15L5.3 9.3L0.8 6H6.4Z" fill="#7a7a7a"/></svg>
<div class="a" style="left:1080.4px;top:510px;width:50px;height:24.5px;background:#404040;"></div>
<svg style="left:1086px;top:517px" width="20" height="12" viewBox="0 0 20 12"><path d="M1 6Q10 -2.5 19 6Q10 14.5 1 6Z" fill="none" stroke="#7e7e7e" stroke-width="1.5"/><circle cx="10" cy="5.6" r="3.3" fill="#7e7e7e"/></svg>
<div class="t" style="left:1107px;top:513px;font-size:15.5px;color:#a8a8a8;font-size:15.5px">24</div>
<div class="a" style="left:1130.5px;top:510px;width:1.5px;height:26px;background:#262626;"></div>
<div class="a" style="left:0px;top:536px;width:229px;height:264px;background:#383838;"></div>
<div class="a" style="left:229px;top:536px;width:17px;height:264px;background:#363636;"></div>
<div class="a" style="left:246px;top:536px;width:1px;height:264px;background:#232323;"></div>
<div class="a" style="left:247px;top:536px;width:885px;height:26.5px;background:#3c3c3c;"></div>
<div class="a" style="left:247px;top:562.5px;width:885px;height:222.5px;background:#303030;"></div>
<div class="a" style="left:247px;top:785px;width:885px;height:15px;background:#3c3c3c;"></div>
<div class="a" style="left:247px;top:784.5px;width:885px;height:1px;background:#2a2a2a;"></div>
<svg style="left:233px;top:543px" width="10" height="6" viewBox="0 0 10 6"><path d="M0 6H10L5 0Z" fill="#c4c4c4"/></svg>
<div class="a" style="left:232px;top:556.5px;width:13px;height:103px;background:#5e5e5e;border-radius:6.5px"></div>
<div class="a" style="left:0px;top:734px;width:229px;height:20px;background:#4b4b4b;"></div>
<svg style="left:-6px;top:542px" width="11" height="10" viewBox="0 0 11 10"><path d="M0 0H11L5.5 9.5Z" fill="#6a6a6a"/></svg>
<svg style="left:11.5px;top:538.5px" width="14" height="13" viewBox="0 0 14 13"><path d="M7 0.5L8.8 5H13.6L9.7 7.9L11.2 12.6L7 9.8L2.8 12.6L4.3 7.9L0.4 5H5.2Z" fill="#d0d0d0"/></svg>
<div class="t" style="left:32.5px;top:536px;width:199.5px;overflow:hidden;font-weight:bold;font-size:15px;color:#c6c6c6;">Favorites</div>
<svg style="left:28px;top:558.5px" width="16" height="16" viewBox="0 0 16 16"><circle cx="6.5" cy="6.5" r="5" fill="none" stroke="#c8c8c8" stroke-width="1.5"/><path d="M10.2 10.2L14.5 14.5" stroke="#c8c8c8" stroke-width="2"/></svg>
<div class="t" style="left:48.4px;top:556px;width:183.6px;overflow:hidden;font-size:15.5px;">All Materials</div>
<svg style="left:28px;top:578.5px" width="16" height="16" viewBox="0 0 16 16"><circle cx="6.5" cy="6.5" r="5" fill="none" stroke="#c8c8c8" stroke-width="1.5"/><path d="M10.2 10.2L14.5 14.5" stroke="#c8c8c8" stroke-width="2"/></svg>
<div class="t" style="left:48.4px;top:576px;width:183.6px;overflow:hidden;font-size:15.5px;">All Models</div>
<svg style="left:28px;top:598.5px" width="16" height="16" viewBox="0 0 16 16"><circle cx="6.5" cy="6.5" r="5" fill="none" stroke="#c8c8c8" stroke-width="1.5"/><path d="M10.2 10.2L14.5 14.5" stroke="#c8c8c8" stroke-width="2"/></svg>
<div class="t" style="left:48.4px;top:596px;width:183.6px;overflow:hidden;font-size:15.5px;">All Prefabs</div>
<svg style="left:-6px;top:640px" width="11" height="10" viewBox="0 0 11 10"><path d="M0 0H11L5.5 9.5Z" fill="#6a6a6a"/></svg>
<svg style="left:11px;top:637px" width="18" height="14" viewBox="0 0 18 14"><path d="M0.5 1.5Q0.5 0.8 1.2 0.8H5.3L7 2.6H13Q13.6 2.6 13.6 3.2V4.8H4Q3.3 4.8 3 5.5L1.6 9.5" fill="none" stroke="#d0d0d0" stroke-width="1.4"/><path d="M0.6 12.4L3.6 5.4H16.8L14 12.4Z" fill="#d0d0d0"/><path d="M0.6 1.2V12.4" stroke="#d0d0d0" stroke-width="1.3"/></svg>
<div class="t" style="left:32.5px;top:634px;width:199.5px;overflow:hidden;font-weight:bold;font-size:15px;color:#c6c6c6;">Assets</div>
<svg style="left:28.5px;top:656.5px" width="16" height="14" viewBox="0 0 16 14"><path d="M0.5 1.5Q0.5 0.8 1.2 0.8H5.3L7 2.6H14Q14.6 2.6 14.6 3.2V12Q14.6 12.6 14 12.6H1.2Q0.5 12.6 0.5 12Z" fill="#d0d0d0"/></svg>
<div class="t" style="left:48.8px;top:654px;width:183.2px;overflow:hidden;font-size:15.5px;">Scenes</div>
<svg style="left:28.5px;top:676.5px" width="16" height="14" viewBox="0 0 16 14"><path d="M0.5 1.5Q0.5 0.8 1.2 0.8H5.3L7 2.6H14Q14.6 2.6 14.6 3.2V12Q14.6 12.6 14 12.6H1.2Q0.5 12.6 0.5 12Z" fill="#d0d0d0"/></svg>
<div class="t" style="left:48.8px;top:674px;width:183.2px;overflow:hidden;font-size:15.5px;">Settings</div>
<svg style="left:28.5px;top:698px" width="18" height="14" viewBox="0 0 18 14"><path d="M0.5 1.5Q0.5 0.8 1.2 0.8H5.3L7 2.6H13Q13.6 2.6 13.6 3.2V4.8H4Q3.3 4.8 3 5.5L1.6 9.5" fill="none" stroke="#d0d0d0" stroke-width="1.4"/><path d="M0.6 12.4L3.6 5.4H16.8L14 12.4Z" fill="#d0d0d0"/><path d="M0.6 1.2V12.4" stroke="#d0d0d0" stroke-width="1.3"/></svg>
<svg style="left:11px;top:700px" width="11" height="10" viewBox="0 0 11 10"><path d="M0 0H11L5.5 9.5Z" fill="#6a6a6a"/></svg>
<div class="t" style="left:49.5px;top:694px;width:182.5px;overflow:hidden;font-size:15.5px;">The Legendary RPG Fantasy Orchestra - Adventure, Exploration &amp; Emotional Loops</div>
<svg style="left:46px;top:716.5px" width="16" height="14" viewBox="0 0 16 14"><path d="M0.5 1.5Q0.5 0.8 1.2 0.8H5.3L7 2.6H14Q14.6 2.6 14.6 3.2V12Q14.6 12.6 14 12.6H1.2Q0.5 12.6 0.5 12Z" fill="#d0d0d0"/></svg>
<div class="t" style="left:66.3px;top:714px;width:165.7px;overflow:hidden;font-size:15.5px;">Adventure &amp; Exploration</div>
<svg style="left:46px;top:736.5px" width="16" height="14" viewBox="0 0 16 14"><path d="M0.5 1.5Q0.5 0.8 1.2 0.8H5.3L7 2.6H14Q14.6 2.6 14.6 3.2V12Q14.6 12.6 14 12.6H1.2Q0.5 12.6 0.5 12Z" fill="#d0d0d0"/></svg>
<div class="t" style="left:66.3px;top:734px;width:165.7px;overflow:hidden;font-size:15.5px;">Emotional Atmospheres</div>
<svg style="left:28.5px;top:756.5px" width="16" height="14" viewBox="0 0 16 14"><path d="M0.5 1.5Q0.5 0.8 1.2 0.8H5.3L7 2.6H14Q14.6 2.6 14.6 3.2V12Q14.6 12.6 14 12.6H1.2Q0.5 12.6 0.5 12Z" fill="#d0d0d0"/></svg>
<svg style="left:12.4px;top:759px" width="10" height="11" viewBox="0 0 10 11"><path d="M0 0V11L9.5 5.5Z" fill="#6a6a6a"/></svg>
<div class="t" style="left:49.5px;top:754px;width:182.5px;overflow:hidden;font-size:15.5px;">TutorialInfo</div>
<svg style="left:-6px;top:780px" width="11" height="10" viewBox="0 0 11 10"><path d="M0 0H11L5.5 9.5Z" fill="#6a6a6a"/></svg>
<svg style="left:11px;top:777px" width="18" height="14" viewBox="0 0 18 14"><path d="M0.5 1.5Q0.5 0.8 1.2 0.8H5.3L7 2.6H13Q13.6 2.6 13.6 3.2V4.8H4Q3.3 4.8 3 5.5L1.6 9.5" fill="none" stroke="#d0d0d0" stroke-width="1.4"/><path d="M0.6 12.4L3.6 5.4H16.8L14 12.4Z" fill="#d0d0d0"/><path d="M0.6 1.2V12.4" stroke="#d0d0d0" stroke-width="1.3"/></svg>
<div class="t" style="left:32.5px;top:774px;width:199.5px;overflow:hidden;font-weight:bold;font-size:15px;color:#c6c6c6;">Packages</div>
<svg style="left:12.4px;top:799px" width="10" height="11" viewBox="0 0 10 11"><path d="M0 0V11L9.5 5.5Z" fill="#6a6a6a"/></svg>
<svg style="left:28.5px;top:796.5px" width="16" height="14" viewBox="0 0 16 14"><path d="M0.5 1.5Q0.5 0.8 1.2 0.8H5.3L7 2.6H14Q14.6 2.6 14.6 3.2V12Q14.6 12.6 14 12.6H1.2Q0.5 12.6 0.5 12Z" fill="#d0d0d0"/></svg>
<div class="t" style="left:49.5px;top:794px;width:182.5px;overflow:hidden;font-size:15.5px;">AI Navigation</div>
<div class="t" style="left:252.4px;top:538px;font-size:15.5px;color:#b4b4b4">Assets</div>
<svg style="left:307.5px;top:542px" width="8" height="12" viewBox="0 0 8 12"><path d="M1.5 1L6 6L1.5 11" fill="none" stroke="#9a9a9a" stroke-width="1.5"/></svg>
<div class="t" style="left:323px;top:538px;font-size:15.5px;color:#b4b4b4">The Legendary RPG Fantasy Orchestra - Adventure, Exploration &amp; Emotional Loops</div>
<svg style="left:914px;top:542px" width="8" height="12" viewBox="0 0 8 12"><path d="M1.5 1L6 6L1.5 11" fill="none" stroke="#9a9a9a" stroke-width="1.5"/></svg>
<div class="t" style="left:928.5px;top:538px;font-size:15.5px;font-weight:bold;font-size:15px;color:#c6c6c6">Emotional Atmospheres</div>
<div class="a" style="left:272.5px;top:576.5px;width:76px;height:76px;background:#2a2a2a;"></div>
<div class="a" style="left:273px;top:577px;width:75px;height:75px;background:#525252;"></div>
<svg style="left:273px;top:577px" width="75" height="75" viewBox="0 0 75 75"><path d="M2 34.6L3 32.8L4 32.1L5 31.6L6 30.0L7 30.9L8 29.0L9 30.4L10 29.4L11 30.2L12 30.9L13 29.1L14 30.2L15 31.6L16 28.4L17 29.5L18 27.8L19 28.0L20 29.2L21 31.2L22 30.7L23 30.0L24 28.4L25 28.4L26 30.8L27 30.7L28 29.6L29 26.7L30 28.4L31 31.1L32 31.1L33 28.7L34 31.1L35 31.2L36 29.9L37 30.7L38 29.7L39 28.0L40 30.3L41 28.7L42 27.9L43 28.8L44 31.5L45 28.9L46 27.8L47 30.7L48 28.0L49 28.4L50 28.4L51 28.4L52 29.9L53 30.8L54 28.3L55 28.8L56 31.3L57 27.7L58 30.5L59 29.0L60 27.7L61 27.7L62 27.9L63 31.3L64 28.6L65 29.3L66 30.5L67 29.3L68 29.2L69 29.8L70 28.9L71 29.5L72 30.5L73 28.5L74 27.7L75 28.7L75 51.5L74 46.6L73 48.5L72 48.6L71 48.5L70 48.3L69 47.1L68 47.0L67 48.0L66 46.2L65 48.2L64 47.4L63 48.4L62 47.3L61 47.0L60 46.7L59 46.3L58 46.3L57 47.0L56 49.0L55 46.6L54 45.8L53 45.7L52 46.7L51 46.4L50 48.0L49 45.4L48 48.3L47 45.8L46 48.7L45 48.7L44 45.1L43 45.9L42 48.2L41 46.2L40 45.6L39 48.2L38 47.0L37 50.9L36 45.3L35 48.1L34 45.9L33 46.3L32 46.2L31 47.3L30 47.9L29 47.5L28 48.5L27 44.9L26 45.8L25 48.5L24 46.0L23 47.0L22 46.4L21 45.2L20 45.0L19 48.0L18 47.4L17 46.6L16 46.1L15 47.4L14 47.6L13 45.9L12 46.9L11 45.8L10 46.3L9 46.7L8 45.3L7 45.1L6 48.4L5 45.4L4 44.6L3 43.9L2 42.4Z" fill="#ffc200"/></svg>
<svg style="left:274.3px;top:658.3px" width="14" height="14" viewBox="0 0 14 14"><path d="M4.3 3.3L11.6 1.5V3.9L4.3 5.7Z" fill="#f2b600"/><path d="M4.9 4V11M11 2.5V9.8" stroke="#f2b600" stroke-width="1.6"/><ellipse cx="3" cy="11.2" rx="2.3" ry="1.9" fill="#f2b600"/><ellipse cx="9.2" cy="10" rx="2.3" ry="1.9" fill="#f2b600"/></svg>
<div class="t" style="left:290.5px;top:655px;font-size:13px;color:#b8b8b8;-webkit-text-stroke:0.3px #b8b8b8">A Beauti...</div>
<div class="a" style="left:377.5px;top:576.5px;width:76px;height:76px;background:#2a2a2a;"></div>
<div class="a" style="left:378px;top:577px;width:75px;height:75px;background:#525252;"></div>
<svg style="left:378px;top:577px" width="75" height="75" viewBox="0 0 75 75"><path d="M3 37.1L4 36.6L5 35.6L6 36.0L7 35.3L8 35.0L9 34.6L10 33.4L11 33.8L12 33.4L13 33.4L14 34.6L15 33.4L16 33.4L17 34.5L18 33.0L19 34.4L20 34.1L21 34.2L22 35.1L23 34.2L24 33.5L25 34.5L26 33.5L27 31.8L28 33.4L29 33.6L30 33.6L31 34.3L32 33.8L33 34.1L34 33.6L35 32.5L36 33.5L37 32.7L38 32.3L39 34.2L40 32.9L41 33.6L42 35.1L43 34.6L44 34.6L45 34.2L46 33.3L47 33.0L48 33.3L49 32.7L50 34.3L51 33.3L52 33.1L53 33.5L54 32.6L55 34.7L56 33.8L57 34.4L58 32.7L59 32.9L60 34.0L61 34.2L62 34.7L63 32.6L64 31.5L65 30.2L66 32.5L67 32.5L68 31.8L69 30.6L70 30.4L71 31.0L72 32.5L73 31.9L74 30.3L75 31.6L75 44.5L74 44.0L73 44.3L72 43.3L71 44.6L70 45.0L69 45.8L68 43.8L67 46.2L66 43.3L65 45.1L64 43.4L63 42.2L62 43.0L61 42.1L60 41.6L59 43.3L58 42.0L57 43.1L56 42.4L55 42.9L54 42.3L53 43.0L52 43.6L51 42.0L50 42.6L49 43.5L48 43.0L47 42.4L46 42.2L45 42.5L44 41.1L43 42.1L42 42.0L41 43.0L40 43.7L39 43.4L38 43.7L37 43.7L36 43.0L35 43.9L34 42.8L33 43.3L32 43.6L31 43.3L30 44.9L29 44.9L28 43.6L27 44.2L26 42.9L25 42.3L24 42.9L23 42.9L22 42.0L21 41.0L20 42.2L19 41.5L18 42.5L17 42.5L16 42.5L15 44.1L14 43.8L13 43.6L12 42.6L11 43.1L10 42.1L9 41.7L8 41.9L7 43.0L6 41.1L5 40.1L4 39.9L3 39.5Z" fill="#ffc200"/></svg>
<svg style="left:379.3px;top:658.3px" width="14" height="14" viewBox="0 0 14 14"><path d="M4.3 3.3L11.6 1.5V3.9L4.3 5.7Z" fill="#f2b600"/><path d="M4.9 4V11M11 2.5V9.8" stroke="#f2b600" stroke-width="1.6"/><ellipse cx="3" cy="11.2" rx="2.3" ry="1.9" fill="#f2b600"/><ellipse cx="9.2" cy="10" rx="2.3" ry="1.9" fill="#f2b600"/></svg>
<div class="t" style="left:395.5px;top:655px;font-size:13px;color:#b8b8b8;-webkit-text-stroke:0.3px #b8b8b8">A Dark D...</div>
<div class="a" style="left:483.5px;top:576.5px;width:76px;height:76px;background:#2a2a2a;"></div>
<div class="a" style="left:484px;top:577px;width:75px;height:75px;background:#525252;"></div>
<svg style="left:484px;top:577px" width="75" height="75" viewBox="0 0 75 75"><path d="M2 35.2L3 32.0L4 33.2L5 30.7L6 31.7L7 30.5L8 30.8L9 32.0L10 33.2L11 31.0L12 30.9L13 32.8L14 31.2L15 31.7L16 30.8L17 30.0L18 32.1L19 31.9L20 29.7L21 32.4L22 32.0L23 32.6L24 31.3L25 31.8L26 29.2L27 30.0L28 30.4L29 28.8L30 22.4L31 23.5L32 23.7L33 17.8L34 14.0L35 15.1L36 16.3L37 21.9L38 15.0L39 15.1L40 12.9L41 13.1L42 13.9L43 12.4L44 17.2L45 14.1L46 18.0L47 20.4L48 20.8L49 12.6L50 16.3L51 15.1L52 14.7L53 15.7L54 18.8L55 18.0L56 18.9L57 20.1L58 12.3L59 11.7L60 12.8L61 11.9L62 17.4L63 15.1L64 14.3L65 12.4L66 9.1L67 18.0L68 15.1L69 5.0L70 11.6L71 11.6L72 9.1L73 15.4L74 11.1L75 3.0L75 58.2L74 57.3L73 57.6L72 65.2L71 60.6L70 60.2L69 59.6L68 59.4L67 58.9L66 56.7L65 56.3L64 63.7L63 62.0L62 59.1L61 56.5L60 59.8L59 61.1L58 57.3L57 60.1L56 63.3L55 59.3L54 56.9L53 61.0L52 56.6L51 62.0L50 65.5L49 65.8L48 60.8L47 57.9L46 58.6L45 63.3L44 66.1L43 64.2L42 63.9L41 57.5L40 60.5L39 62.9L38 54.9L37 58.1L36 62.6L35 64.9L34 57.7L33 55.4L32 58.1L31 52.1L30 53.3L29 46.1L28 48.3L27 44.8L26 44.0L25 44.0L24 43.9L23 43.5L22 44.1L21 43.4L20 44.0L19 46.1L18 44.7L17 43.7L16 44.2L15 45.6L14 45.2L13 44.9L12 46.1L11 45.0L10 43.5L9 46.1L8 44.9L7 43.7L6 45.1L5 45.5L4 43.8L3 43.6L2 43.5Z" fill="#ffc200"/></svg>
<svg style="left:485.3px;top:658.3px" width="14" height="14" viewBox="0 0 14 14"><path d="M4.3 3.3L11.6 1.5V3.9L4.3 5.7Z" fill="#f2b600"/><path d="M4.9 4V11M11 2.5V9.8" stroke="#f2b600" stroke-width="1.6"/><ellipse cx="3" cy="11.2" rx="2.3" ry="1.9" fill="#f2b600"/><ellipse cx="9.2" cy="10" rx="2.3" ry="1.9" fill="#f2b600"/></svg>
<div class="t" style="left:501.5px;top:655px;font-size:13px;color:#b8b8b8;-webkit-text-stroke:0.3px #b8b8b8">All Is Lo...</div>
<div class="a" style="left:588.5px;top:576.5px;width:76px;height:76px;background:#2a2a2a;"></div>
<div class="a" style="left:589px;top:577px;width:75px;height:75px;background:#525252;"></div>
<svg style="left:589px;top:577px" width="75" height="75" viewBox="0 0 75 75"><path d="M2 37.7L3 36.3L4 34.7L5 34.0L6 35.1L7 36.6L8 37.6L9 36.1L10 34.8L11 34.4L12 35.3L13 37.0L14 37.5L15 35.9L16 34.4L17 34.4L18 35.3L19 37.3L20 37.2L21 35.9L22 34.1L23 34.5L24 35.8L25 37.5L26 37.1L27 35.3L28 34.3L29 34.6L30 35.9L31 37.6L32 36.7L33 35.1L34 34.8L35 34.8L36 36.3L37 37.7L38 36.5L39 35.2L40 34.7L41 35.1L42 36.6L43 37.6L44 36.5L45 35.1L46 33.9L47 35.3L48 37.0L49 37.4L50 35.8L51 34.8L52 34.5L53 35.4L54 37.1L55 37.2L56 35.9L57 34.2L58 34.7L59 35.7L60 37.3L61 37.1L62 35.7L63 34.7L64 35.0L65 35.9L66 37.6L67 37.0L68 35.5L69 25.8L70 26.4L71 26.1L72 28.1L73 27.2L74 25.8L75 28.5L75 49.0L74 50.1L73 49.3L72 49.1L71 49.0L70 49.2L69 50.7L68 41.2L67 39.9L66 39.1L65 40.7L64 41.6L63 42.6L62 41.4L61 39.5L60 39.3L59 41.1L58 42.5L57 42.0L56 40.7L55 39.2L54 39.5L53 40.9L52 42.4L51 41.7L50 40.6L49 39.1L48 39.6L47 41.4L46 41.9L45 42.1L44 40.4L43 39.0L42 39.9L41 41.4L40 42.4L39 42.0L38 40.0L37 38.9L36 40.0L35 42.1L34 42.0L33 41.6L32 39.7L31 39.0L30 40.5L29 41.8L28 42.6L27 41.1L26 39.7L25 39.3L24 40.6L23 42.5L22 42.0L21 40.9L20 39.3L19 39.5L18 41.3L17 42.1L16 42.3L15 40.4L14 39.1L13 39.5L12 41.1L11 42.2L10 42.0L9 40.4L8 38.9L7 40.0L6 41.4L5 42.0L4 41.5L3 40.2L2 38.8Z" fill="#ffc200"/></svg>
<svg style="left:590.3px;top:658.3px" width="14" height="14" viewBox="0 0 14 14"><path d="M4.3 3.3L11.6 1.5V3.9L4.3 5.7Z" fill="#f2b600"/><path d="M4.9 4V11M11 2.5V9.8" stroke="#f2b600" stroke-width="1.6"/><ellipse cx="3" cy="11.2" rx="2.3" ry="1.9" fill="#f2b600"/><ellipse cx="9.2" cy="10" rx="2.3" ry="1.9" fill="#f2b600"/></svg>
<div class="t" style="left:606.5px;top:655px;font-size:13px;color:#b8b8b8;-webkit-text-stroke:0.3px #b8b8b8">Alone L...</div>
<div class="a" style="left:694.5px;top:576.5px;width:76px;height:76px;background:#2a2a2a;"></div>
<div class="a" style="left:695px;top:577px;width:75px;height:75px;background:#525252;"></div>
<svg style="left:695px;top:577px" width="75" height="75" viewBox="0 0 75 75"><path d="M2 35.8L3 35.8L4 33.8L5 33.5L6 33.0L7 34.4L8 34.6L9 33.3L10 32.6L11 34.1L12 32.5L13 32.8L14 33.8L15 32.7L16 33.0L17 33.8L18 32.2L19 33.5L20 33.8L21 34.0L22 32.3L23 33.9L24 32.0L25 32.8L26 31.9L27 31.7L28 31.2L29 31.7L30 31.7L31 31.3L32 32.0L33 30.4L34 32.0L35 32.7L36 32.8L37 31.3L38 31.5L39 29.0L40 32.6L41 31.1L42 31.8L43 31.7L44 32.0L45 30.5L46 30.8L47 30.2L48 30.5L49 30.7L50 30.4L51 29.6L52 24.4L53 27.5L54 31.0L55 28.8L56 29.0L57 29.7L58 26.9L59 29.2L60 27.7L61 28.7L62 29.0L63 24.7L64 26.2L65 24.2L66 29.0L67 27.0L68 23.2L69 26.6L70 25.2L71 25.6L72 22.7L73 24.7L74 25.7L75 19.8L75 54.3L74 50.8L73 55.1L72 51.0L71 51.8L70 53.0L69 53.4L68 47.9L67 53.6L66 51.1L65 53.0L64 51.0L63 47.0L62 49.6L61 49.2L60 51.3L59 50.0L58 50.9L57 50.6L56 46.6L55 46.2L54 45.6L53 46.1L52 49.2L51 48.0L50 46.0L49 48.8L48 48.2L47 48.1L46 46.9L45 46.5L44 47.2L43 47.1L42 46.8L41 46.5L40 45.9L39 46.5L38 47.0L37 45.8L36 45.4L35 46.0L34 46.2L33 43.8L32 45.1L31 45.0L30 43.3L29 44.8L28 45.1L27 43.9L26 45.2L25 42.9L24 44.3L23 43.7L22 43.5L21 43.3L20 46.6L19 43.6L18 42.6L17 42.6L16 42.4L15 42.5L14 42.4L13 43.8L12 42.5L11 44.1L10 42.4L9 42.6L8 43.6L7 44.3L6 42.3L5 41.8L4 41.0L3 40.6L2 41.2Z" fill="#ffc200"/></svg>
<svg style="left:696.3px;top:658.3px" width="14" height="14" viewBox="0 0 14 14"><path d="M4.3 3.3L11.6 1.5V3.9L4.3 5.7Z" fill="#f2b600"/><path d="M4.9 4V11M11 2.5V9.8" stroke="#f2b600" stroke-width="1.6"/><ellipse cx="3" cy="11.2" rx="2.3" ry="1.9" fill="#f2b600"/><ellipse cx="9.2" cy="10" rx="2.3" ry="1.9" fill="#f2b600"/></svg>
<div class="t" style="left:712.5px;top:655px;font-size:13px;color:#b8b8b8;-webkit-text-stroke:0.3px #b8b8b8">Emotion...</div>
<div class="a" style="left:799.5px;top:576.5px;width:76px;height:76px;background:#2a2a2a;"></div>
<div class="a" style="left:800px;top:577px;width:75px;height:75px;background:#525252;"></div>
<svg style="left:800px;top:577px" width="75" height="75" viewBox="0 0 75 75"><path d="M2 36.8L3 34.5L4 32.6L5 32.7L6 32.8L7 31.7L8 31.9L9 32.8L10 31.1L11 31.4L12 33.8L13 31.0L14 33.3L15 31.8L16 31.9L17 31.7L18 33.8L19 31.4L20 34.0L21 33.9L22 32.8L23 31.4L24 32.5L25 33.0L26 34.8L27 33.9L28 33.8L29 33.7L30 33.7L31 34.6L32 35.3L33 34.3L34 34.0L35 33.8L36 34.9L37 34.9L38 34.4L39 34.9L40 34.3L41 35.0L42 34.4L43 31.8L44 30.3L45 29.7L46 25.5L47 24.3L48 18.4L49 26.1L50 15.2L51 24.9L52 20.2L53 21.4L54 23.0L55 16.7L56 18.6L57 18.3L58 17.9L59 22.6L60 24.9L61 23.4L62 18.6L63 20.1L64 20.2L65 28.9L66 33.5L67 33.8L68 32.4L69 33.1L70 34.1L71 31.9L72 34.7L73 34.8L74 32.3L75 34.2L75 43.0L74 42.9L73 43.6L72 43.5L71 44.0L70 42.4L69 42.4L68 43.8L67 42.4L66 42.4L65 45.9L64 60.6L63 55.0L62 55.1L61 59.4L60 57.6L59 59.8L58 58.2L57 59.9L56 58.4L55 64.8L54 52.0L53 52.7L52 59.1L51 58.6L50 57.7L49 54.5L48 52.2L47 56.1L46 51.7L45 47.0L44 48.4L43 43.8L42 42.3L41 42.7L40 42.5L39 42.4L38 41.4L37 41.8L36 42.4L35 41.6L34 43.8L33 41.7L32 42.8L31 42.3L30 43.1L29 41.9L28 42.3L27 41.8L26 41.3L25 44.0L24 44.1L23 44.3L22 42.6L21 45.1L20 42.6L19 43.3L18 44.4L17 44.7L16 43.5L15 45.5L14 43.2L13 45.5L12 43.9L11 44.5L10 43.1L9 43.5L8 44.1L7 44.2L6 45.7L5 44.9L4 43.3L3 41.6L2 39.6Z" fill="#ffc200"/></svg>
<svg style="left:801.3px;top:658.3px" width="14" height="14" viewBox="0 0 14 14"><path d="M4.3 3.3L11.6 1.5V3.9L4.3 5.7Z" fill="#f2b600"/><path d="M4.9 4V11M11 2.5V9.8" stroke="#f2b600" stroke-width="1.6"/><ellipse cx="3" cy="11.2" rx="2.3" ry="1.9" fill="#f2b600"/><ellipse cx="9.2" cy="10" rx="2.3" ry="1.9" fill="#f2b600"/></svg>
<div class="t" style="left:817.5px;top:655px;font-size:13px;color:#b8b8b8;-webkit-text-stroke:0.3px #b8b8b8">Emotion...</div>
<div class="a" style="left:905.5px;top:576.5px;width:76px;height:76px;background:#2a2a2a;"></div>
<div class="a" style="left:906px;top:577px;width:75px;height:75px;background:#525252;"></div>
<svg style="left:906px;top:577px" width="75" height="75" viewBox="0 0 75 75"><path d="M2 33.8L3 32.9L4 31.0L5 32.6L6 32.7L7 28.5L8 28.8L9 32.6L10 30.0L11 30.0L12 29.9L13 30.3L14 31.7L15 30.5L16 30.8L17 26.9L18 31.1L19 30.1L20 27.8L21 30.2L22 29.1L23 26.9L24 29.1L25 26.7L26 26.3L27 27.4L28 24.3L29 25.8L30 25.8L31 26.6L32 26.7L33 25.0L34 28.6L35 27.8L36 28.4L37 27.7L38 25.8L39 25.2L40 26.2L41 25.9L42 24.0L43 26.8L44 27.3L45 27.7L46 27.3L47 27.0L48 24.4L49 23.6L50 23.2L51 27.3L52 21.9L53 22.2L54 24.4L55 23.8L56 22.0L57 25.9L58 24.8L59 25.4L60 23.1L61 23.2L62 22.2L63 24.1L64 25.5L65 22.5L66 23.2L67 20.8L68 15.6L69 20.5L70 24.6L71 24.3L72 23.1L73 20.2L74 19.7L75 21.4L75 53.3L74 58.1L73 55.0L72 60.0L71 52.3L70 52.9L69 57.2L68 54.1L67 55.9L66 54.5L65 56.0L64 52.8L63 56.1L62 52.7L61 56.2L60 53.1L59 52.8L58 54.9L57 57.8L56 54.2L55 51.9L54 53.7L53 52.9L52 52.5L51 53.5L50 57.1L49 53.0L48 53.5L47 50.6L46 49.9L45 50.6L44 48.8L43 53.4L42 49.5L41 51.6L40 49.6L39 50.2L38 50.6L37 48.2L36 49.0L35 50.2L34 50.1L33 48.6L32 48.3L31 48.3L30 47.1L29 49.5L28 46.8L27 49.6L26 50.2L25 51.3L24 47.9L23 49.0L22 49.1L21 48.8L20 46.2L19 47.8L18 45.8L17 47.7L16 45.2L15 47.7L14 48.3L13 46.4L12 44.6L11 45.0L10 45.1L9 45.7L8 44.3L7 45.0L6 46.0L5 45.9L4 45.9L3 43.2L2 41.8Z" fill="#ffc200"/></svg>
<svg style="left:907.3px;top:658.3px" width="14" height="14" viewBox="0 0 14 14"><path d="M4.3 3.3L11.6 1.5V3.9L4.3 5.7Z" fill="#f2b600"/><path d="M4.9 4V11M11 2.5V9.8" stroke="#f2b600" stroke-width="1.6"/><ellipse cx="3" cy="11.2" rx="2.3" ry="1.9" fill="#f2b600"/><ellipse cx="9.2" cy="10" rx="2.3" ry="1.9" fill="#f2b600"/></svg>
<div class="t" style="left:923.5px;top:655px;font-size:13px;color:#b8b8b8;-webkit-text-stroke:0.3px #b8b8b8">Face Th...</div>
<div class="a" style="left:1010.5px;top:576.5px;width:76px;height:76px;background:#2a2a2a;"></div>
<div class="a" style="left:1011px;top:577px;width:75px;height:75px;background:#525252;"></div>
<svg style="left:1011px;top:577px" width="75" height="75" viewBox="0 0 75 75"><path d="M1 28.9L2 28.1L3 27.6L4 26.9L5 25.0L6 27.6L7 26.3L8 27.5L9 26.9L10 25.4L11 26.8L12 26.2L13 26.3L14 23.3L15 21.0L16 25.5L17 26.4L18 25.8L19 19.8L20 23.8L21 22.9L22 24.0L23 23.8L24 24.2L25 20.0L26 21.4L27 18.6L28 18.6L29 22.6L30 17.1L31 17.5L32 20.2L33 20.5L34 20.7L35 15.9L36 19.7L37 21.5L38 21.3L39 23.3L40 23.3L41 23.2L42 19.5L43 19.9L44 22.2L45 20.2L46 22.9L47 25.3L48 22.7L49 24.6L50 21.5L51 25.2L52 21.9L53 26.2L54 21.2L55 25.1L56 24.5L57 25.7L58 26.3L59 24.9L60 26.0L61 24.0L62 26.3L63 25.0L64 28.1L65 25.8L66 23.7L67 28.3L68 29.0L69 27.0L70 25.7L71 22.1L72 24.4L73 24.7L74 22.0L75 21.8L75 54.3L74 53.8L73 56.9L72 56.1L71 55.5L70 49.8L69 49.2L68 46.9L67 49.0L66 48.3L65 47.8L64 48.0L63 48.1L62 51.6L61 50.3L60 48.7L59 48.8L58 49.4L57 49.4L56 53.3L55 54.3L54 53.3L53 52.6L52 51.8L51 51.4L50 52.1L49 50.9L48 56.2L47 55.0L46 58.4L45 59.1L44 57.4L43 62.7L42 53.0L41 57.7L40 60.1L39 58.8L38 56.5L37 59.7L36 54.5L35 56.9L34 55.4L33 60.3L32 56.9L31 55.6L30 58.6L29 57.8L28 54.7L27 56.7L26 54.6L25 54.3L24 54.7L23 54.9L22 56.2L21 56.0L20 55.9L19 54.8L18 53.9L17 57.0L16 50.8L15 49.9L14 52.1L13 54.5L12 53.0L11 50.5L10 52.8L9 52.2L8 48.2L7 51.8L6 53.0L5 48.5L4 48.1L3 48.4L2 45.9L1 47.0Z" fill="#ffc200"/></svg>
<svg style="left:1012.3px;top:658.3px" width="14" height="14" viewBox="0 0 14 14"><path d="M4.3 3.3L11.6 1.5V3.9L4.3 5.7Z" fill="#f2b600"/><path d="M4.9 4V11M11 2.5V9.8" stroke="#f2b600" stroke-width="1.6"/><ellipse cx="3" cy="11.2" rx="2.3" ry="1.9" fill="#f2b600"/><ellipse cx="9.2" cy="10" rx="2.3" ry="1.9" fill="#f2b600"/></svg>
<div class="t" style="left:1028.5px;top:655px;font-size:13px;color:#b8b8b8;-webkit-text-stroke:0.3px #b8b8b8">Glorious ...</div>
<div class="a" style="left:272.5px;top:692.2px;width:76px;height:76px;background:#2a2a2a;"></div>
<div class="a" style="left:273px;top:692.7px;width:75px;height:75px;background:#525252;"></div>
<svg style="left:273px;top:692.7px" width="75" height="75" viewBox="0 0 75 75"><path d="M2 34.6L3 34.4L4 34.0L5 32.8L6 34.6L7 33.4L8 33.9L9 31.9L10 33.2L11 31.9L12 34.1L13 33.7L14 32.9L15 33.1L16 32.8L17 32.3L18 33.6L19 33.1L20 33.8L21 32.0L22 31.5L23 33.2L24 31.0L25 29.6L26 31.1L27 32.5L28 31.1L29 32.4L30 31.7L31 30.5L32 32.1L33 32.3L34 28.7L35 28.3L36 28.5L37 30.3L38 31.8L39 26.0L40 30.5L41 29.4L42 28.3L43 28.1L44 26.1L45 25.8L46 27.1L47 26.5L48 26.2L49 21.4L50 22.7L51 20.5L52 17.0L53 16.5L54 17.0L55 20.4L56 17.6L57 18.1L58 9.0L59 15.9L60 17.2L61 16.4L62 20.1L63 20.2L64 19.2L65 14.9L66 19.7L67 22.7L68 18.7L69 20.9L70 17.5L71 15.9L72 13.3L73 17.8L74 17.3L75 19.9L75 53.8L74 56.3L73 55.4L72 53.7L71 56.4L70 59.2L69 59.0L68 57.6L67 59.9L66 54.0L65 53.8L64 53.5L63 57.7L62 58.4L61 59.3L60 61.9L59 55.1L58 58.9L57 65.7L56 54.9L55 55.0L54 53.1L53 55.1L52 56.0L51 54.9L50 51.4L49 52.5L48 50.4L47 53.8L46 52.0L45 50.7L44 50.8L43 47.4L42 48.7L41 50.6L40 46.9L39 45.1L38 48.2L37 46.7L36 46.6L35 46.5L34 45.9L33 44.7L32 45.6L31 47.3L30 44.2L29 45.3L28 43.8L27 43.9L26 43.6L25 46.3L24 45.2L23 44.9L22 44.3L21 43.9L20 44.2L19 44.6L18 45.0L17 42.8L16 46.1L15 43.4L14 42.7L13 43.4L12 45.2L11 42.5L10 43.1L9 43.1L8 43.1L7 44.0L6 43.3L5 43.8L4 43.6L3 41.7L2 41.8Z" fill="#ffc200"/></svg>
<svg style="left:274.3px;top:773.8px" width="14" height="14" viewBox="0 0 14 14"><path d="M4.3 3.3L11.6 1.5V3.9L4.3 5.7Z" fill="#f2b600"/><path d="M4.9 4V11M11 2.5V9.8" stroke="#f2b600" stroke-width="1.6"/><ellipse cx="3" cy="11.2" rx="2.3" ry="1.9" fill="#f2b600"/><ellipse cx="9.2" cy="10" rx="2.3" ry="1.9" fill="#f2b600"/></svg>
<div class="t" style="left:290.5px;top:770.5px;font-size:13px;color:#b8b8b8;-webkit-text-stroke:0.3px #b8b8b8">No Goin...</div>
<div class="a" style="left:377.5px;top:692.2px;width:76px;height:76px;background:#2a2a2a;"></div>
<div class="a" style="left:378px;top:692.7px;width:75px;height:75px;background:#525252;"></div>
<svg style="left:378px;top:692.7px" width="75" height="75" viewBox="0 0 75 75"><path d="M3 37.4L4 36.2L5 33.8L6 32.5L7 32.8L8 31.7L9 31.9L10 32.6L11 32.8L12 32.8L13 33.0L14 31.5L15 32.0L16 31.7L17 32.6L18 30.9L19 32.4L20 33.1L21 32.9L22 32.3L23 30.7L24 31.5L25 30.0L26 31.0L27 32.2L28 31.4L29 32.1L30 30.9L31 32.9L32 32.4L33 31.8L34 31.0L35 32.7L36 32.5L37 33.5L38 32.0L39 33.2L40 33.4L41 32.1L42 31.4L43 32.9L44 31.7L45 31.7L46 32.8L47 32.2L48 32.8L49 32.0L50 32.9L51 31.2L52 31.2L53 32.6L54 31.9L55 30.7L56 31.1L57 32.2L58 31.8L59 33.0L60 32.3L61 31.5L62 31.1L63 32.2L64 31.5L65 31.8L66 31.5L67 33.1L68 32.1L69 32.2L70 32.2L71 32.1L72 32.4L73 31.6L74 33.3L75 31.7L75 44.5L74 45.1L73 45.0L72 43.3L71 45.2L70 45.4L69 44.4L68 46.8L67 45.2L66 44.3L65 45.7L64 45.5L63 45.3L62 46.1L61 45.7L60 44.1L59 43.9L58 44.4L57 44.8L56 45.4L55 45.2L54 44.5L53 43.6L52 45.4L51 46.4L50 45.4L49 44.6L48 43.6L47 45.0L46 44.7L45 44.0L44 44.2L43 44.7L42 44.4L41 45.5L40 44.8L39 45.1L38 44.0L37 44.6L36 44.2L35 44.2L34 45.3L33 44.5L32 46.1L31 45.0L30 45.5L29 45.6L28 44.6L27 43.8L26 43.6L25 43.6L24 43.5L23 43.5L22 45.8L21 43.9L20 45.8L19 43.5L18 44.0L17 45.8L16 44.6L15 45.6L14 45.3L13 45.3L12 45.5L11 43.7L10 44.0L9 46.0L8 46.1L7 45.5L6 43.4L5 42.1L4 40.2L3 39.2Z" fill="#ffc200"/></svg>
<svg style="left:379.3px;top:773.8px" width="14" height="14" viewBox="0 0 14 14"><path d="M4.3 3.3L11.6 1.5V3.9L4.3 5.7Z" fill="#f2b600"/><path d="M4.9 4V11M11 2.5V9.8" stroke="#f2b600" stroke-width="1.6"/><ellipse cx="3" cy="11.2" rx="2.3" ry="1.9" fill="#f2b600"/><ellipse cx="9.2" cy="10" rx="2.3" ry="1.9" fill="#f2b600"/></svg>
<div class="t" style="left:395.5px;top:770.5px;font-size:13px;color:#b8b8b8;-webkit-text-stroke:0.3px #b8b8b8">One Min...</div>
<div class="a" style="left:483.5px;top:692.2px;width:76px;height:76px;background:#2a2a2a;"></div>
<div class="a" style="left:484px;top:692.7px;width:75px;height:75px;background:#525252;"></div>
<svg style="left:484px;top:692.7px" width="75" height="75" viewBox="0 0 75 75"><path d="M0 18.4L1 22.6L2 25.1L3 24.2L4 20.4L5 25.3L6 19.7L7 22.9L8 17.6L9 24.8L10 21.2L11 22.9L12 21.6L13 24.2L14 18.3L15 18.7L16 22.3L17 18.1L18 21.5L19 15.4L20 22.4L21 20.5L22 18.6L23 21.8L24 20.1L25 16.6L26 17.7L27 22.2L28 23.9L29 19.3L30 18.8L31 18.0L32 24.3L33 23.5L34 24.3L35 22.9L36 25.8L37 19.4L38 23.6L39 23.6L40 25.2L41 26.4L42 27.2L43 28.4L44 22.6L45 28.6L46 23.5L47 21.9L48 21.0L49 21.0L50 19.4L51 17.6L52 22.3L53 17.5L54 20.7L55 19.4L56 18.1L57 22.4L58 22.5L59 17.7L60 19.8L61 21.0L62 22.4L63 14.2L64 16.8L65 17.9L66 13.6L67 21.4L68 23.1L69 20.7L70 22.1L71 21.4L72 20.1L73 21.2L74 20.5L75 16.3L75 56.5L74 55.1L73 59.5L72 62.5L71 53.7L70 55.6L69 57.3L68 56.3L67 57.1L66 55.8L65 58.8L64 58.1L63 58.1L62 60.5L61 60.6L60 59.8L59 59.6L58 59.3L57 60.0L56 53.5L55 54.0L54 57.9L53 59.2L52 56.4L51 52.5L50 51.3L49 52.7L48 50.1L47 53.1L46 51.7L45 49.8L44 52.5L43 52.7L42 52.5L41 49.9L40 50.8L39 49.1L38 53.6L37 50.0L36 53.4L35 54.6L34 55.4L33 60.6L32 58.6L31 54.3L30 57.1L29 52.6L28 55.3L27 57.2L26 58.5L25 62.3L24 55.9L23 52.4L22 53.2L21 53.2L20 53.8L19 58.4L18 56.8L17 53.0L16 59.4L15 55.8L14 56.3L13 60.2L12 58.3L11 56.6L10 53.8L9 53.6L8 56.6L7 54.2L6 52.7L5 52.9L4 54.3L3 52.3L2 57.9L1 56.5L0 53.2Z" fill="#ffc200"/></svg>
<svg style="left:485.3px;top:773.8px" width="14" height="14" viewBox="0 0 14 14"><path d="M4.3 3.3L11.6 1.5V3.9L4.3 5.7Z" fill="#f2b600"/><path d="M4.9 4V11M11 2.5V9.8" stroke="#f2b600" stroke-width="1.6"/><ellipse cx="3" cy="11.2" rx="2.3" ry="1.9" fill="#f2b600"/><ellipse cx="9.2" cy="10" rx="2.3" ry="1.9" fill="#f2b600"/></svg>
<div class="t" style="left:501.5px;top:770.5px;font-size:13px;color:#b8b8b8;-webkit-text-stroke:0.3px #b8b8b8">Royal Ho...</div>
<div class="a" style="left:588.5px;top:692.2px;width:76px;height:76px;background:#2a2a2a;"></div>
<div class="a" style="left:589px;top:692.7px;width:75px;height:75px;background:#525252;"></div>
<svg style="left:589px;top:692.7px" width="75" height="75" viewBox="0 0 75 75"><path d="M2 34.3L3 32.9L4 30.8L5 31.5L6 30.4L7 31.3L8 30.2L9 29.4L10 27.2L11 29.0L12 27.1L13 27.4L14 30.5L15 29.4L16 28.7L17 27.5L18 27.3L19 26.5L20 26.1L21 28.3L22 25.3L23 25.1L24 28.7L25 24.6L26 26.8L27 27.3L28 26.1L29 27.1L30 26.0L31 26.5L32 28.1L33 26.2L34 26.5L35 26.1L36 28.1L37 28.9L38 25.8L39 27.9L40 28.4L41 27.0L42 27.3L43 27.3L44 29.7L45 29.0L46 29.0L47 26.0L48 29.7L49 27.7L50 26.5L51 27.1L52 28.8L53 23.3L54 27.8L55 27.1L56 28.6L57 25.2L58 28.7L59 27.1L60 27.8L61 26.9L62 27.5L63 25.1L64 25.0L65 24.8L66 27.5L67 27.9L68 23.4L69 23.8L70 23.6L71 24.6L72 27.4L73 22.0L74 22.7L75 19.8L75 51.6L74 54.0L73 51.6L72 54.0L71 51.7L70 51.9L69 51.2L68 50.9L67 49.3L66 51.5L65 51.3L64 52.0L63 52.5L62 50.4L61 48.6L60 48.4L59 48.9L58 49.3L57 50.4L56 50.9L55 48.7L54 47.2L53 51.1L52 50.2L51 48.2L50 47.7L49 47.8L48 52.4L47 49.9L46 49.8L45 46.7L44 49.3L43 49.6L42 48.3L41 49.8L40 48.9L39 50.2L38 52.1L37 50.6L36 48.7L35 48.8L34 51.5L33 50.4L32 47.7L31 49.2L30 52.2L29 52.1L28 51.1L27 48.5L26 51.6L25 48.8L24 48.6L23 48.1L22 51.3L21 47.2L20 47.5L19 51.8L18 47.6L17 47.9L16 50.1L15 49.1L14 47.5L13 46.4L12 51.6L11 47.2L10 48.9L9 47.7L8 47.5L7 47.2L6 48.0L5 46.6L4 46.9L3 44.2L2 43.1Z" fill="#ffc200"/></svg>
<svg style="left:590.3px;top:773.8px" width="14" height="14" viewBox="0 0 14 14"><path d="M4.3 3.3L11.6 1.5V3.9L4.3 5.7Z" fill="#f2b600"/><path d="M4.9 4V11M11 2.5V9.8" stroke="#f2b600" stroke-width="1.6"/><ellipse cx="3" cy="11.2" rx="2.3" ry="1.9" fill="#f2b600"/><ellipse cx="9.2" cy="10" rx="2.3" ry="1.9" fill="#f2b600"/></svg>
<div class="t" style="left:606.5px;top:770.5px;font-size:13px;color:#b8b8b8;-webkit-text-stroke:0.3px #b8b8b8">Uprising...</div>
<div class="a" style="left:694.5px;top:692.2px;width:76px;height:76px;background:#2a2a2a;"></div>
<div class="a" style="left:695px;top:692.7px;width:75px;height:75px;background:#525252;"></div>
<svg style="left:695px;top:692.7px" width="75" height="75" viewBox="0 0 75 75"><path d="M2 20.8L3 25.7L4 19.0L5 31.0L6 30.5L7 30.6L8 30.9L9 26.7L10 32.7L11 28.7L12 32.9L13 30.3L14 27.9L15 30.3L16 30.6L17 23.6L18 22.6L19 20.0L20 25.9L21 25.5L22 28.6L23 28.7L24 28.6L25 28.1L26 26.1L27 24.4L28 23.1L29 20.5L30 21.0L31 23.4L32 26.0L33 22.7L34 18.0L35 28.8L36 25.7L37 16.8L38 22.5L39 27.2L40 19.2L41 17.4L42 28.6L43 26.8L44 19.5L45 26.4L46 22.4L47 25.4L48 27.2L49 21.6L50 25.6L51 21.3L52 20.3L53 20.7L54 27.3L55 22.2L56 22.2L57 27.8L58 25.9L59 28.0L60 20.6L61 25.7L62 28.8L63 25.1L64 28.5L65 23.5L66 19.5L67 24.2L68 28.5L69 20.2L70 23.2L71 27.8L72 22.2L73 29.5L74 27.7L75 28.5L75 54.1L74 51.4L73 51.2L72 48.5L71 57.7L70 53.8L69 49.0L68 56.8L67 55.4L66 52.4L65 48.3L64 49.5L63 48.4L62 53.9L61 53.6L60 49.6L59 51.8L58 55.3L57 57.1L56 57.6L55 49.1L54 54.3L53 59.1L52 52.4L51 48.8L50 52.1L49 51.3L48 49.1L47 48.7L46 54.9L45 50.7L44 59.4L43 52.5L42 50.6L41 48.8L40 52.0L39 53.1L38 51.4L37 53.0L36 55.3L35 49.9L34 55.0L33 56.7L32 48.4L31 54.3L30 56.1L29 58.7L28 56.1L27 51.6L26 47.9L25 52.8L24 50.5L23 53.8L22 56.0L21 50.0L20 53.7L19 49.3L18 51.1L17 50.4L16 50.2L15 47.7L14 47.5L13 45.7L12 44.0L11 48.1L10 45.9L9 46.1L8 49.1L7 45.2L6 46.8L5 44.6L4 58.1L3 54.1L2 50.5Z" fill="#ffc200"/></svg>
<svg style="left:696.3px;top:773.8px" width="14" height="14" viewBox="0 0 14 14"><path d="M4.3 3.3L11.6 1.5V3.9L4.3 5.7Z" fill="#f2b600"/><path d="M4.9 4V11M11 2.5V9.8" stroke="#f2b600" stroke-width="1.6"/><ellipse cx="3" cy="11.2" rx="2.3" ry="1.9" fill="#f2b600"/><ellipse cx="9.2" cy="10" rx="2.3" ry="1.9" fill="#f2b600"/></svg>
<div class="t" style="left:712.5px;top:770.5px;font-size:13px;color:#b8b8b8;-webkit-text-stroke:0.3px #b8b8b8">We Will ...</div>
<div class="a" style="left:799.5px;top:692.2px;width:76px;height:76px;background:#2a2a2a;"></div>
<div class="a" style="left:800px;top:692.7px;width:75px;height:75px;background:#525252;"></div>
<svg style="left:800px;top:692.7px" width="75" height="75" viewBox="0 0 75 75"><path d="M2 32.6L3 32.6L4 31.5L5 29.9L6 31.6L7 29.8L8 29.3L9 27.8L10 30.0L11 30.9L12 30.9L13 27.9L14 30.1L15 27.1L16 28.1L17 27.6L18 23.1L19 28.9L20 28.3L21 26.3L22 27.3L23 28.9L24 28.9L25 28.0L26 26.7L27 29.3L28 26.4L29 28.2L30 27.2L31 25.6L32 28.4L33 28.7L34 28.4L35 27.0L36 26.6L37 27.4L38 26.4L39 28.6L40 26.1L41 25.3L42 28.2L43 30.2L44 23.2L45 30.0L46 29.1L47 30.0L48 29.5L49 28.5L50 30.2L51 27.4L52 29.8L53 26.8L54 27.7L55 29.5L56 28.1L57 28.8L58 27.1L59 26.7L60 26.2L61 25.9L62 28.8L63 28.4L64 28.0L65 27.0L66 28.1L67 27.2L68 25.9L69 25.8L70 27.4L71 27.6L72 20.8L73 25.1L74 27.0L75 26.7L75 50.4L74 51.4L73 54.2L72 50.6L71 56.2L70 51.0L69 53.3L68 51.9L67 51.5L66 48.4L65 51.3L64 48.3L63 51.8L62 50.1L61 48.6L60 50.7L59 48.1L58 50.8L57 48.1L56 51.7L55 49.3L54 47.1L53 52.1L52 48.8L51 47.2L50 46.9L49 46.9L48 49.2L47 46.4L46 48.0L45 47.3L44 46.3L43 47.3L42 46.9L41 47.6L40 49.6L39 50.5L38 50.2L37 51.9L36 47.8L35 51.2L34 50.6L33 48.4L32 48.7L31 49.2L30 51.9L29 49.3L28 48.1L27 49.3L26 49.2L25 52.2L24 49.9L23 47.2L22 50.2L21 48.8L20 48.8L19 47.7L18 48.1L17 49.8L16 48.0L15 46.3L14 46.5L13 51.7L12 48.0L11 46.9L10 46.9L9 46.9L8 45.9L7 48.3L6 48.1L5 47.9L4 45.9L3 45.4L2 43.0Z" fill="#ffc200"/></svg>
<svg style="left:801.3px;top:773.8px" width="14" height="14" viewBox="0 0 14 14"><path d="M4.3 3.3L11.6 1.5V3.9L4.3 5.7Z" fill="#f2b600"/><path d="M4.9 4V11M11 2.5V9.8" stroke="#f2b600" stroke-width="1.6"/><ellipse cx="3" cy="11.2" rx="2.3" ry="1.9" fill="#f2b600"/><ellipse cx="9.2" cy="10" rx="2.3" ry="1.9" fill="#f2b600"/></svg>
<div class="t" style="left:817.5px;top:770.5px;font-size:13px;color:#b8b8b8;-webkit-text-stroke:0.3px #b8b8b8">When Dr...</div>
<div class="a" style="left:905.5px;top:692.2px;width:76px;height:76px;background:#2a2a2a;"></div>
<div class="a" style="left:906px;top:692.7px;width:75px;height:75px;background:#525252;"></div>
<svg style="left:906px;top:692.7px" width="75" height="75" viewBox="0 0 75 75"><path d="M2 30.8L3 29.5L4 30.1L5 25.5L6 28.5L7 29.3L8 28.1L9 24.5L10 29.0L11 25.3L12 26.5L13 25.1L14 27.8L15 24.7L16 25.5L17 24.2L18 28.3L19 29.0L20 27.7L21 28.9L22 25.9L23 27.0L24 24.6L25 25.8L26 29.2L27 27.2L28 25.8L29 25.2L30 28.9L31 26.6L32 28.2L33 25.3L34 26.8L35 24.5L36 24.9L37 23.4L38 23.7L39 24.9L40 25.2L41 22.0L42 24.6L43 28.0L44 23.7L45 25.8L46 26.6L47 26.6L48 27.0L49 24.9L50 27.8L51 24.6L52 23.3L53 28.5L54 28.1L55 26.9L56 26.4L57 28.4L58 27.7L59 25.8L60 24.9L61 26.3L62 20.6L63 28.8L64 24.8L65 26.9L66 22.7L67 23.7L68 22.6L69 21.5L70 25.5L71 25.2L72 26.5L73 26.9L74 22.6L75 23.2L75 50.0L74 51.5L73 50.4L72 50.5L71 54.0L70 50.3L69 53.1L68 51.9L67 51.7L66 48.8L65 51.4L64 53.7L63 53.2L62 50.3L61 50.0L60 48.8L59 56.3L58 50.7L57 48.9L56 52.5L55 53.1L54 50.5L53 48.0L52 47.9L51 51.9L50 51.1L49 50.7L48 51.9L47 50.6L46 51.1L45 48.3L44 53.2L43 47.5L42 52.6L41 52.1L40 48.2L39 48.4L38 48.5L37 49.9L36 52.0L35 51.9L34 53.6L33 50.4L32 49.3L31 49.6L30 50.6L29 48.9L28 52.3L27 51.7L26 49.3L25 48.9L24 48.2L23 48.9L22 47.2L21 52.3L20 51.7L19 49.9L18 50.6L17 50.9L16 48.2L15 49.1L14 49.6L13 51.3L12 51.7L11 54.5L10 52.4L9 47.5L8 48.0L7 50.8L6 49.1L5 48.8L4 47.2L3 46.0L2 45.8Z" fill="#ffc200"/></svg>
<svg style="left:907.3px;top:773.8px" width="14" height="14" viewBox="0 0 14 14"><path d="M4.3 3.3L11.6 1.5V3.9L4.3 5.7Z" fill="#f2b600"/><path d="M4.9 4V11M11 2.5V9.8" stroke="#f2b600" stroke-width="1.6"/><ellipse cx="3" cy="11.2" rx="2.3" ry="1.9" fill="#f2b600"/><ellipse cx="9.2" cy="10" rx="2.3" ry="1.9" fill="#f2b600"/></svg>
<div class="t" style="left:923.5px;top:770.5px;font-size:13px;color:#b8b8b8;-webkit-text-stroke:0.3px #b8b8b8">Why Not...</div>
<div class="a" style="left:1116px;top:562px;width:15px;height:223px;background:#2c2c2c;"></div>
<svg style="left:1118.3px;top:569px" width="10" height="6" viewBox="0 0 10 6"><path d="M0 6H10L5 0Z" fill="#c4c4c4"/></svg>
<div class="a" style="left:1117px;top:582.5px;width:12.2px;height:174.5px;background:#5e5e5e;border-radius:6px"></div>
<div class="a" style="left:1130.3px;top:536px;width:1.7px;height:264px;background:#202020;"></div>
<svg style="left:1118.3px;top:773px" width="10" height="6" viewBox="0 0 10 6"><path d="M0 0H10L5 6Z" fill="#c4c4c4"/></svg>
<svg style="left:252px;top:790px" width="16" height="14" viewBox="0 0 16 14"><path d="M0.5 1.5Q0.5 0.8 1.2 0.8H5.3L7 2.6H14Q14.6 2.6 14.6 3.2V12Q14.6 12.6 14 12.6H1.2Q0.5 12.6 0.5 12Z" fill="#d0d0d0"/></svg>
<div class="t" style="left:273px;top:788.5px;width:772px;overflow:hidden;font-size:15.5px;color:#c4c4c4">Assets/The Legendary RPG Fantasy Orchestra - Adventure, Exploration &amp; Emotional Loops/Emotional Atmospheres/A Beautiful</div>
<div class="a" style="left:1045px;top:797.5px;width:65px;height:2px;background:#5a5a5a;"></div>
<div class="a" style="left:1074px;top:791px;width:14px;height:14px;border-radius:7px;background:#9c9c9c"></div>
</body></html>
